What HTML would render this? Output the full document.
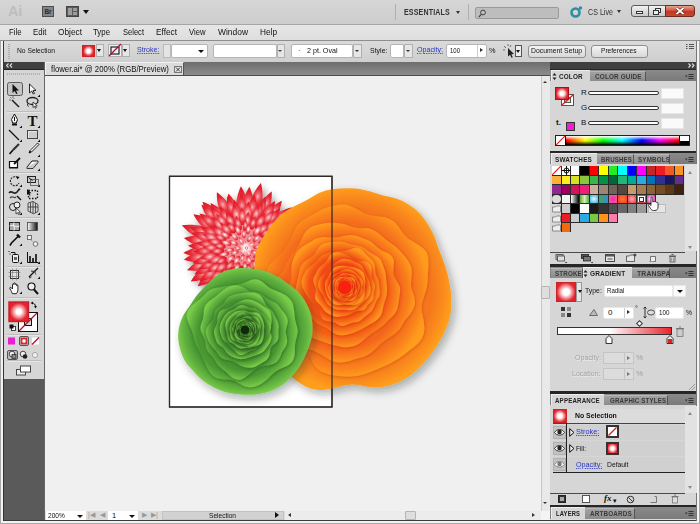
<!DOCTYPE html>
<html><head><meta charset="utf-8"><title>flower.ai</title>
<style>
*{box-sizing:border-box;margin:0;padding:0}
html,body{width:700px;height:524px;overflow:hidden}
body{position:relative;background:#d4d4d4;font-family:"Liberation Sans",sans-serif;font-size:9px;color:#111;line-height:1}
.a{position:absolute}
.t{position:absolute;white-space:nowrap}
.lnk{color:#2a35c0;text-decoration:underline dotted;}
.inp{position:absolute;background:#fff;border:1px solid #b5b5b5;border-radius:2px}
.btn{position:absolute;border:1px solid #8f8f8f;border-radius:3px;background:linear-gradient(#f4f4f4,#d8d8d8);text-align:center;font-size:8px;line-height:11px}
.tab{position:absolute;font-size:8px;font-weight:bold;letter-spacing:0.2px;color:#333;white-space:nowrap}
.dd{position:absolute;width:0;height:0;border-left:3px solid transparent;border-right:3px solid transparent;border-top:4px solid #111}
.phead{position:absolute;left:551px;width:141px;height:12px;background:linear-gradient(#5f5f5f,#7a7a7a)}
.ptab{position:absolute;top:0;height:12px;background:#d6d6d6;font-size:7.5px;font-weight:bold;color:#222;line-height:12px;padding-left:4px;white-space:nowrap}
.itab{position:absolute;top:1px;height:11px;font-size:7.5px;font-weight:bold;color:#2e2e2e;line-height:11px;white-space:nowrap;border-right:1px solid #4a4a4a;padding-left:4px;background:linear-gradient(#8e8e8e,#7c7c7c)}
.pbody{position:absolute;left:551px;width:141px;background:#d6d6d6}
.sw{position:absolute;width:8px;height:8px}
</style></head><body>
<!-- window border -->
<div class="a" style="left:0;top:0;width:700px;height:524px;background:#d9d9d9"></div>
<!-- app bar -->
<div class="a" style="left:0;top:0;width:700px;height:24px;background:linear-gradient(#d6d6d6,#cdcdcd)"></div>
<div class="t" style="left:8px;top:4px;font-size:14.500px;font-weight:bold;color:#bdbdbd;letter-spacing:-0.3px">Ai</div>
<div class="a" style="left:42px;top:6px;width:12px;height:11px;background:#858585;border:1px solid #4c4c4c;color:#2a2a2a;font-size:6.5px;font-weight:bold;line-height:9px;text-align:center">Br</div>
<div class="a" style="left:66px;top:6px;width:13px;height:11px;background:#5a5a5a;border:1px solid #444"></div>
<div class="a" style="left:68px;top:8px;width:4px;height:7px;background:#9c9c9c"></div>
<div class="a" style="left:73px;top:8px;width:4px;height:3px;background:#9c9c9c"></div>
<div class="a" style="left:73px;top:12px;width:4px;height:3px;background:#9c9c9c"></div>
<div class="dd" style="left:83px;top:10px"></div>
<div class="a" style="left:395px;top:4px;width:1px;height:16px;background:#b0b0b0"></div>
<div class="t" style="left:404px;top:8px;font-size:8.4px;font-weight:bold;color:#333;letter-spacing:0.2px;transform:scaleX(0.840);transform-origin:0 0">ESSENTIALS</div>
<div class="dd" style="left:456px;top:11px;border-left-width:2.5px;border-right-width:2.5px;border-top-width:3px;border-top-color:#333"></div>
<div class="a" style="left:468px;top:4px;width:1px;height:16px;background:#b0b0b0"></div>
<div class="a" style="left:475px;top:7px;width:84px;height:12px;background:#bdbdbd;border:1px solid #9a9a9a;border-radius:2px"></div>
<svg class="a" style="left:478px;top:9px" width="9" height="9" viewBox="0 0 9 9"><circle cx="5" cy="3.5" r="2.4" fill="none" stroke="#444" stroke-width="1"/><path d="M3.2 5.3L0.8 8" stroke="#444" stroke-width="1.2"/></svg>
<svg class="a" style="left:569px;top:5px" width="15" height="14" viewBox="0 0 15 14"><circle cx="6.5" cy="7.5" r="4" fill="none" stroke="#2a8ea6" stroke-width="2.6"/><circle cx="11.5" cy="3" r="1.7" fill="#2a8ea6"/></svg>
<div class="t" style="left:588px;top:8px;font-size:8.5px;color:#333;transform:scaleX(0.840);transform-origin:0 0">CS Live</div>
<div class="dd" style="left:617px;top:10px;border-left-width:2.5px;border-right-width:2.5px;border-top-width:3px;border-top-color:#333"></div>
<!-- window buttons -->
<div class="a" style="left:631px;top:5px;width:18px;height:12px;border:1px solid #5b5b5b;border-radius:3px 0 0 3px;background:linear-gradient(#f2f2f2,#c9c9c9)"></div>
<div class="a" style="left:636px;top:11px;width:7px;height:3px;border:1px solid #333;background:#fff"></div>
<div class="a" style="left:648px;top:5px;width:18px;height:12px;border:1px solid #5b5b5b;background:linear-gradient(#f2f2f2,#c9c9c9)"></div>
<div class="a" style="left:655px;top:8px;width:6px;height:5px;border:1px solid #333;background:#eee"></div>
<div class="a" style="left:653px;top:10px;width:6px;height:5px;border:1px solid #333;background:#eee"></div>
<div class="a" style="left:665px;top:5px;width:30px;height:12px;border:1px solid #6b2a22;border-radius:0 3px 3px 0;background:linear-gradient(#e6a594,#d05540 45%,#c23a24 55%,#c8452f)"></div>
<svg class="a" style="left:675px;top:7px" width="10" height="8"><path d="M1.500 1L8.500 7M8.500 1L1.500 7" stroke="#5a1a10" stroke-width="3"/><path d="M1.500 1L8.500 7M8.500 1L1.500 7" stroke="#fff" stroke-width="1.800"/></svg>
<!-- menu bar -->
<div class="a" style="left:0;top:24px;width:700px;height:1px;background:#a6a6a6"></div>
<div class="a" style="left:0;top:25px;width:700px;height:15px;background:linear-gradient(#e6e6e6,#dedede)"></div>
<div class="t" style="left:9px;top:28px;font-size:8.5px;transform:scaleX(0.913);transform-origin:0 0">File</div>
<div class="t" style="left:33px;top:28px;font-size:8.5px;transform:scaleX(0.922);transform-origin:0 0">Edit</div>
<div class="t" style="left:58px;top:28px;font-size:8.5px;transform:scaleX(0.977);transform-origin:0 0">Object</div>
<div class="t" style="left:93px;top:28px;font-size:8.5px;transform:scaleX(0.922);transform-origin:0 0">Type</div>
<div class="t" style="left:123px;top:28px;font-size:8.5px;transform:scaleX(0.889);transform-origin:0 0">Select</div>
<div class="t" style="left:156px;top:28px;font-size:8.5px;transform:scaleX(0.973);transform-origin:0 0">Effect</div>
<div class="t" style="left:189px;top:28px;font-size:8.5px;transform:scaleX(0.903);transform-origin:0 0">View</div>
<div class="t" style="left:218px;top:28px;font-size:8.5px;transform:scaleX(0.992);transform-origin:0 0">Window</div>
<div class="t" style="left:260px;top:28px;font-size:8.5px;transform:scaleX(0.972);transform-origin:0 0">Help</div>
<!-- control bar -->
<div class="a" style="left:0;top:40px;width:700px;height:1px;background:#8e8e8e"></div>
<div class="a" style="left:3px;top:41px;width:694px;height:21px;background:linear-gradient(#dadada,#cfcfcf)"></div>
<div class="a" style="left:8px;top:44px;width:2px;height:15px;background:repeating-linear-gradient(#aaa 0 1px,transparent 1px 2px)"></div>
<div class="t" style="left:17px;top:47px;font-size:7.5px;transform:scaleX(0.894);transform-origin:0 0">No Selection</div>
<div class="a" style="left:82px;top:45px;width:13px;height:12px;border:1px solid #c22;background:radial-gradient(circle closest-side,#fff 35%,#e0202c 105%)"></div>
<div class="a" style="left:96px;top:44px;width:8px;height:13px;border:1px solid #b0b0b0;background:#e6e6e6"></div><div class="dd" style="left:97px;top:49px;border-width:3px 2.5px 0 2.5px"></div>
<div class="a" style="left:108px;top:44px;width:14px;height:13px;border:1px solid #b0b0b0;background:#efefef"></div>
<svg class="a" style="left:107px;top:43px" width="16" height="15"><rect x="4" y="4" width="8" height="7" fill="none" stroke="#222" stroke-width="1.2"/><path d="M2 13L14 1" stroke="#a01030" stroke-width="1.3"/></svg>
<div class="a" style="left:122px;top:44px;width:8px;height:13px;border:1px solid #b0b0b0;background:#e6e6e6"></div><div class="dd" style="left:123px;top:49px;border-width:3px 2.5px 0 2.5px"></div>
<div class="t lnk" style="left:137px;top:46px;font-size:8px;transform:scaleX(0.888);transform-origin:0 0">Stroke:</div>
<div class="a" style="left:163px;top:44px;width:8px;height:14px;border:1px solid #bbb;background:#e4e4e4"></div>
<div class="inp" style="left:171px;top:44px;width:37px;height:14px"></div><div class="dd" style="left:198px;top:50px;border-width:3px 3px 0 3px"></div>
<div class="inp" style="left:213px;top:44px;width:64px;height:14px"></div>
<div class="a" style="left:277px;top:44px;width:8px;height:14px;border:1px solid #b0b0b0;background:#e6e6e6"></div><div class="dd" style="left:278px;top:50px;border-width:2px 2.5px 0 2.5px;border-top-color:#444"></div>
<div class="inp" style="left:291px;top:44px;width:62px;height:14px"></div>
<div class="t" style="left:298px;top:47px;font-size:7.5px">·</div>
<div class="t" style="left:307px;top:47px;font-size:7.5px;transform:scaleX(0.950);transform-origin:0 0">2 pt. Oval</div>
<div class="a" style="left:353px;top:44px;width:9px;height:14px;border:1px solid #b0b0b0;background:#e6e6e6"></div><div class="dd" style="left:355px;top:50px;border-width:2px 2.5px 0 2.5px;border-top-color:#333"></div>
<div class="t" style="left:370px;top:47px;font-size:7.5px;transform:scaleX(0.933);transform-origin:0 0">Style:</div>
<div class="inp" style="left:390px;top:44px;width:14px;height:14px"></div>
<div class="a" style="left:404px;top:44px;width:9px;height:14px;border:1px solid #b0b0b0;background:#e6e6e6"></div><div class="dd" style="left:406px;top:50px;border-width:2px 2.5px 0 2.5px;border-top-color:#333"></div>
<div class="t lnk" style="left:417px;top:46px;font-size:8px;transform:scaleX(0.886);transform-origin:0 0">Opacity:</div>
<div class="inp" style="left:446px;top:44px;width:41px;height:14px"></div>
<div class="t" style="left:450px;top:47px;font-size:7.5px;transform:scaleX(0.799);transform-origin:0 0">100</div>
<div class="a" style="left:477px;top:45px;width:1px;height:12px;background:#ccc"></div>
<div class="a" style="left:480px;top:48px;width:0;height:0;border-top:2.5px solid transparent;border-bottom:2.5px solid transparent;border-left:3px solid #333"></div>
<div class="t" style="left:489px;top:47px;font-size:7.5px;transform:scaleX(0.975);transform-origin:0 0">%</div>
<svg class="a" style="left:503px;top:44px" width="13" height="14" viewBox="0 0 13 14"><path d="M5 4l6 6-2.6.2 1.4 3-1.3.6-1.4-3L5 12.5z" fill="#222"/><path d="M1 2l2 2M5 0v2M8 1L7 3M0 6h2" stroke="#555" stroke-width="0.8"/></svg>
<div class="a" style="left:515px;top:45px;width:7px;height:12px;border:1px solid #555;background:#eee"></div><div class="dd" style="left:516px;top:50px;border-width:3px 2.5px 0 2.5px"></div>
<div class="btn" style="left:528px;top:45px;width:58px;height:13px"></div><div class="t" style="left:531px;top:47px;font-size:7.5px;transform:scaleX(0.913);transform-origin:0 0">Document Setup</div>
<div class="btn" style="left:591px;top:45px;width:57px;height:13px"></div><div class="t" style="left:601px;top:47px;font-size:7.5px;transform:scaleX(0.878);transform-origin:0 0">Preferences</div>
<svg class="a" style="left:686px;top:43px" width="8" height="7"><path d="M0 1.5h1.5M0 3.5h1.5M0 5.5h1.5M3 1.5h5M3 3.5h5M3 5.5h5" stroke="#555" stroke-width="1"/></svg>
<!-- tab bar -->
<div class="a" style="left:3px;top:62px;width:694px;height:13px;background:linear-gradient(#6d6d6d,#8c8c8c)"></div>
<div class="a" style="left:3px;top:75px;width:548px;height:1px;background:#4c4c4c"></div>
<!-- document tab -->
<div class="a" style="left:45px;top:62px;width:139px;height:13px;background:#dcdcdc;border-left:1px solid #f2f2f2;border-top:1px solid #f2f2f2;border-right:1px solid #555"></div>
<div class="t" style="left:51px;top:65px;font-size:8.5px;color:#111;transform:scaleX(0.917);transform-origin:0 0">flower.ai* @ 200% (RGB/Preview)</div>
<div class="a" style="left:174px;top:66px;width:8px;height:7px;border:1px solid #777;background:#e6e6e6"></div>
<svg class="a" style="left:174px;top:66px" width="8" height="7"><path d="M2 1.5L6 5.5M6 1.5L2 5.5" stroke="#333" stroke-width="1"/></svg>
<!-- canvas -->
<div class="a" style="left:45px;top:76px;width:496px;height:435px;background:#f0f0f0"></div>
<div class="a" style="left:44px;top:62px;width:1px;height:458px;background:#666"></div>
<svg class="a" style="left:45px;top:78px" width="496" height="433" viewBox="45 78 496 433"><defs><filter id="shS" x="-20%" y="-20%" width="140%" height="140%"><feDropShadow dx="0.5" dy="0.7" stdDeviation="1.6" flood-color="#a02000" flood-opacity="0.3"/></filter><filter id="shG" x="-20%" y="-20%" width="140%" height="140%"><feDropShadow dx="0.5" dy="0.7" stdDeviation="1.6" flood-color="#0a2a00" flood-opacity="0.4"/></filter><filter id="shB" x="-20%" y="-20%" width="150%" height="150%"><feDropShadow dx="3" dy="4" stdDeviation="4.500" flood-color="#101820" flood-opacity="0.33"/></filter><filter id="shR" x="-20%" y="-20%" width="150%" height="150%"><feDropShadow dx="2.5" dy="3" stdDeviation="3" flood-color="#000" flood-opacity="0.4"/></filter><radialGradient id="oc"><stop offset="0" stop-color="#ff2010"/><stop offset="0.45" stop-color="#ff2010" stop-opacity="0.9"/><stop offset="1" stop-color="#ff3010" stop-opacity="0"/></radialGradient><radialGradient id="rc"><stop offset="0" stop-color="#fff"/><stop offset="0.4" stop-color="#fff" stop-opacity="0.8"/><stop offset="1" stop-color="#fff" stop-opacity="0"/></radialGradient><radialGradient id="rp0" cx="0.5" cy="0.5" r="0.5" gradientTransform="translate(0.5 0.5) scale(1 1.6) translate(-0.5 -0.5)"><stop offset="0" stop-color="#fff"/><stop offset="0.3" stop-color="#f9b4b9"/><stop offset="0.7" stop-color="#ec4650"/><stop offset="1" stop-color="#dc1c28"/></radialGradient><radialGradient id="rp1" cx="0.5" cy="0.5" r="0.5" gradientTransform="translate(0.5 0.5) scale(1 1.6) translate(-0.5 -0.5)"><stop offset="0" stop-color="#fcd4d7"/><stop offset="0.28" stop-color="#f47f88"/><stop offset="0.62" stop-color="#e8303b"/><stop offset="1" stop-color="#d81622"/></radialGradient><radialGradient id="rp2" cx="0.5" cy="0.5" r="0.5" gradientTransform="translate(0.5 0.5) scale(1 1.6) translate(-0.5 -0.5)"><stop offset="0" stop-color="#f9b0b5"/><stop offset="0.25" stop-color="#f0606a"/><stop offset="0.55" stop-color="#e62a36"/><stop offset="1" stop-color="#d61420"/></radialGradient><radialGradient id="o0" cx="50%" cy="50%" r="52%"><stop offset="0.77" stop-color="#f5761c"/><stop offset="0.88" stop-color="#fa8a1d"/><stop offset="0.97" stop-color="#ff9e1e"/></radialGradient><radialGradient id="o1" cx="50%" cy="50%" r="52%"><stop offset="0.77" stop-color="#f46d1b"/><stop offset="0.88" stop-color="#fa841c"/><stop offset="0.97" stop-color="#ff9c1e"/></radialGradient><radialGradient id="o2" cx="50%" cy="50%" r="52%"><stop offset="0.77" stop-color="#f4651a"/><stop offset="0.88" stop-color="#fa801c"/><stop offset="0.97" stop-color="#ff9a1e"/></radialGradient><radialGradient id="o3" cx="50%" cy="50%" r="52%"><stop offset="0.77" stop-color="#f35e19"/><stop offset="0.88" stop-color="#f97b1b"/><stop offset="0.97" stop-color="#ff981d"/></radialGradient><radialGradient id="o4" cx="50%" cy="50%" r="52%"><stop offset="0.77" stop-color="#f25718"/><stop offset="0.88" stop-color="#f8771a"/><stop offset="0.97" stop-color="#ff971d"/></radialGradient><radialGradient id="o5" cx="50%" cy="50%" r="52%"><stop offset="0.77" stop-color="#f25117"/><stop offset="0.88" stop-color="#f8731a"/><stop offset="0.97" stop-color="#ff951d"/></radialGradient><radialGradient id="o6" cx="50%" cy="50%" r="52%"><stop offset="0.77" stop-color="#f14a16"/><stop offset="0.88" stop-color="#f86f1a"/><stop offset="0.97" stop-color="#ff941d"/></radialGradient><radialGradient id="o7" cx="50%" cy="50%" r="52%"><stop offset="0.77" stop-color="#f14415"/><stop offset="0.88" stop-color="#f86b19"/><stop offset="0.97" stop-color="#ff921d"/></radialGradient><radialGradient id="o8" cx="50%" cy="50%" r="52%"><stop offset="0.77" stop-color="#f03e14"/><stop offset="0.88" stop-color="#f86818"/><stop offset="0.97" stop-color="#ff911d"/></radialGradient><radialGradient id="o9" cx="50%" cy="50%" r="52%"><stop offset="0.77" stop-color="#f03913"/><stop offset="0.88" stop-color="#f86418"/><stop offset="0.97" stop-color="#ff8f1d"/></radialGradient><radialGradient id="o10" cx="50%" cy="50%" r="52%"><stop offset="0.77" stop-color="#ef3312"/><stop offset="0.88" stop-color="#f76017"/><stop offset="0.97" stop-color="#ff8e1c"/></radialGradient><radialGradient id="o11" cx="50%" cy="50%" r="52%"><stop offset="0.77" stop-color="#ef2d12"/><stop offset="0.88" stop-color="#f75d17"/><stop offset="0.97" stop-color="#ff8d1c"/></radialGradient><radialGradient id="o12" cx="50%" cy="50%" r="52%"><stop offset="0.77" stop-color="#ee2811"/><stop offset="0.88" stop-color="#f65a16"/><stop offset="0.97" stop-color="#ff8b1c"/></radialGradient><radialGradient id="o13" cx="50%" cy="50%" r="52%"><stop offset="0.77" stop-color="#ee2210"/><stop offset="0.88" stop-color="#f65616"/><stop offset="0.97" stop-color="#ff8a1c"/></radialGradient><radialGradient id="g0" cx="50%" cy="50%" r="52%"><stop offset="0.77" stop-color="#4a9a34"/><stop offset="0.88" stop-color="#62b23f"/><stop offset="0.97" stop-color="#7acb4a"/></radialGradient><radialGradient id="g1" cx="50%" cy="50%" r="52%"><stop offset="0.77" stop-color="#499833"/><stop offset="0.88" stop-color="#62b23e"/><stop offset="0.97" stop-color="#7acb4a"/></radialGradient><radialGradient id="g2" cx="50%" cy="50%" r="52%"><stop offset="0.77" stop-color="#479432"/><stop offset="0.88" stop-color="#60b03e"/><stop offset="0.97" stop-color="#7acb4a"/></radialGradient><radialGradient id="g3" cx="50%" cy="50%" r="52%"><stop offset="0.77" stop-color="#448f30"/><stop offset="0.88" stop-color="#5eac3d"/><stop offset="0.97" stop-color="#79ca4a"/></radialGradient><radialGradient id="g4" cx="50%" cy="50%" r="52%"><stop offset="0.77" stop-color="#41892e"/><stop offset="0.88" stop-color="#5daa3c"/><stop offset="0.97" stop-color="#79ca4a"/></radialGradient><radialGradient id="g5" cx="50%" cy="50%" r="52%"><stop offset="0.77" stop-color="#3d822b"/><stop offset="0.88" stop-color="#5ba63a"/><stop offset="0.97" stop-color="#79ca4a"/></radialGradient><radialGradient id="g6" cx="50%" cy="50%" r="52%"><stop offset="0.77" stop-color="#387928"/><stop offset="0.88" stop-color="#58a138"/><stop offset="0.97" stop-color="#78c949"/></radialGradient><radialGradient id="g7" cx="50%" cy="50%" r="52%"><stop offset="0.77" stop-color="#337024"/><stop offset="0.88" stop-color="#569c36"/><stop offset="0.97" stop-color="#78c949"/></radialGradient><radialGradient id="g8" cx="50%" cy="50%" r="52%"><stop offset="0.77" stop-color="#2d6621"/><stop offset="0.88" stop-color="#529735"/><stop offset="0.97" stop-color="#77c849"/></radialGradient><radialGradient id="g9" cx="50%" cy="50%" r="52%"><stop offset="0.77" stop-color="#285c1d"/><stop offset="0.88" stop-color="#509233"/><stop offset="0.97" stop-color="#77c849"/></radialGradient><radialGradient id="g10" cx="50%" cy="50%" r="52%"><stop offset="0.77" stop-color="#215018"/><stop offset="0.88" stop-color="#4c8c30"/><stop offset="0.97" stop-color="#76c749"/></radialGradient><radialGradient id="g11" cx="50%" cy="50%" r="52%"><stop offset="0.77" stop-color="#1b4414"/><stop offset="0.88" stop-color="#48852e"/><stop offset="0.97" stop-color="#75c648"/></radialGradient><radialGradient id="g12" cx="50%" cy="50%" r="52%"><stop offset="0.77" stop-color="#13370f"/><stop offset="0.88" stop-color="#447e2c"/><stop offset="0.97" stop-color="#75c648"/></radialGradient><radialGradient id="g13" cx="50%" cy="50%" r="52%"><stop offset="0.77" stop-color="#0c2a0a"/><stop offset="0.88" stop-color="#407829"/><stop offset="0.97" stop-color="#74c548"/></radialGradient></defs><rect x="169.500" y="176.300" width="162.500" height="230.700" fill="#fff" stroke="#333" stroke-width="1.200"/><g filter="url(#shR)"><g transform="translate(245 249)"><circle r="36" fill="#f28890"/><path d="M35.6 0C35.6 -9.2 53.1 -7.7 67.5 0C53.1 7.7 35.6 9.2 35.6 0Z" transform="rotate(200.5)" fill="url(#rp2)"/><path d="M34.1 0C34.1 -9.7 52.7 -8.2 67.9 0C52.7 8.2 34.1 9.7 34.1 0Z" transform="rotate(63.0)" fill="url(#rp2)"/><path d="M40.2 0C40.2 -7.9 55.4 -6.7 67.8 0C55.4 6.7 40.2 7.9 40.2 0Z" transform="rotate(283.6)" fill="url(#rp2)"/><path d="M31.7 0C31.7 -9.1 49.1 -7.6 63.3 0C49.1 7.6 31.7 9.1 31.7 0Z" transform="rotate(149.1)" fill="url(#rp2)"/><path d="M35.1 0C35.1 -8.7 51.7 -7.3 65.3 0C51.7 7.3 35.1 8.7 35.1 0Z" transform="rotate(7.1)" fill="url(#rp2)"/><path d="M32.6 0C32.6 -8.9 49.6 -7.5 63.5 0C49.6 7.5 32.6 8.9 32.6 0Z" transform="rotate(228.0)" fill="url(#rp2)"/><path d="M37.3 0C37.3 -8.3 53.1 -7.0 66.1 0C53.1 7.0 37.3 8.3 37.3 0Z" transform="rotate(96.7)" fill="url(#rp2)"/><path d="M34.8 0C34.8 -8.0 50.1 -6.7 62.7 0C50.1 6.7 34.8 8.0 34.8 0Z" transform="rotate(318.3)" fill="url(#rp2)"/><path d="M31.0 0C31.0 -8.8 47.9 -7.4 61.8 0C47.9 7.4 31.0 8.8 31.0 0Z" transform="rotate(176.2)" fill="url(#rp2)"/><path d="M30.4 0C30.4 -9.3 48.1 -7.8 62.7 0C48.1 7.8 30.4 9.3 30.4 0Z" transform="rotate(39.3)" fill="url(#rp2)"/><path d="M30.0 0C30.0 -9.4 48.1 -7.9 62.9 0C48.1 7.9 30.0 9.4 30.0 0Z" transform="rotate(266.3)" fill="url(#rp2)"/><path d="M32.1 0C32.1 -9.4 50.0 -7.9 64.6 0C50.0 7.9 32.1 9.4 32.1 0Z" transform="rotate(126.5)" fill="url(#rp2)"/><path d="M36.9 0C36.9 -7.9 52.1 -6.7 64.5 0C52.1 6.7 36.9 7.9 36.9 0Z" transform="rotate(351.8)" fill="url(#rp2)"/><path d="M30.0 0C30.0 -9.3 47.8 -7.8 62.3 0C47.8 7.8 30.0 9.3 30.0 0Z" transform="rotate(214.0)" fill="url(#rp2)"/><path d="M33.0 0C33.0 -8.1 48.6 -6.8 61.3 0C48.6 6.8 33.0 8.1 33.0 0Z" transform="rotate(71.4)" fill="url(#rp2)"/><path d="M37.1 0C37.1 -7.6 51.6 -6.4 63.4 0C51.6 6.4 37.1 7.6 37.1 0Z" transform="rotate(294.9)" fill="url(#rp2)"/><path d="M36.1 0C36.1 -7.4 50.3 -6.2 61.9 0C50.3 6.2 36.1 7.4 36.1 0Z" transform="rotate(159.9)" fill="url(#rp2)"/><path d="M34.8 0C34.8 -7.9 50.0 -6.7 62.4 0C50.0 6.7 34.8 7.9 34.8 0Z" transform="rotate(23.4)" fill="url(#rp2)"/><path d="M35.8 0C35.8 -7.9 50.9 -6.7 63.3 0C50.9 6.7 35.8 7.9 35.8 0Z" transform="rotate(243.6)" fill="url(#rp2)"/><path d="M33.9 0C33.9 -7.4 48.1 -6.2 59.7 0C48.1 6.2 33.9 7.4 33.9 0Z" transform="rotate(109.5)" fill="url(#rp2)"/><path d="M29.5 0C29.5 -8.6 46.0 -7.2 59.5 0C46.0 7.2 29.5 8.6 29.5 0Z" transform="rotate(331.1)" fill="url(#rp2)"/><path d="M32.0 0C32.0 -8.7 48.5 -7.3 62.1 0C48.5 7.3 32.0 8.7 32.0 0Z" transform="rotate(190.3)" fill="url(#rp2)"/><path d="M34.7 0C34.7 -7.2 48.6 -6.1 59.9 0C48.6 6.1 34.7 7.2 34.7 0Z" transform="rotate(50.6)" fill="url(#rp2)"/><path d="M31.7 0C31.7 -8.9 48.6 -7.4 62.5 0C48.6 7.4 31.7 8.9 31.7 0Z" transform="rotate(274.1)" fill="url(#rp2)"/><path d="M29.8 0C29.8 -8.8 46.6 -7.4 60.3 0C46.6 7.4 29.8 8.8 29.8 0Z" transform="rotate(141.7)" fill="url(#rp2)"/><path d="M35.3 0C35.3 -7.7 50.1 -6.5 62.2 0C50.1 6.5 35.3 7.7 35.3 0Z" transform="rotate(1.3)" fill="url(#rp2)"/><path d="M36.8 0C36.8 -7.3 50.7 -6.1 62.1 0C50.7 6.1 36.8 7.3 36.8 0Z" transform="rotate(225.4)" fill="url(#rp2)"/><path d="M32.9 0C32.9 -8.5 49.2 -7.2 62.6 0C49.2 7.2 32.9 8.5 32.9 0Z" transform="rotate(83.0)" fill="url(#rp2)"/><path d="M35.8 0C35.8 -7.2 49.5 -6.0 60.7 0C49.5 6.0 35.8 7.2 35.8 0Z" transform="rotate(307.5)" fill="url(#rp2)"/><path d="M32.3 0C32.3 -8.6 48.6 -7.2 62.0 0C48.6 7.2 32.3 8.6 32.3 0Z" transform="rotate(170.0)" fill="url(#rp2)"/><path d="M31.5 0C31.5 -7.9 46.6 -6.6 58.9 0C46.6 6.6 31.5 7.9 31.5 0Z" transform="rotate(32.3)" fill="url(#rp2)"/><path d="M32.8 0C32.8 -7.2 46.6 -6.1 57.9 0C46.6 6.1 32.8 7.2 32.8 0Z" transform="rotate(253.2)" fill="url(#rp2)"/><path d="M29.7 0C29.7 -8.1 45.1 -6.8 57.7 0C45.1 6.8 29.7 8.1 29.7 0Z" transform="rotate(122.0)" fill="url(#rp2)"/><path d="M35.2 0C35.2 -6.9 48.4 -5.8 59.3 0C48.4 5.8 35.2 6.9 35.2 0Z" transform="rotate(344.4)" fill="url(#rp2)"/><path d="M33.3 0C33.3 -7.5 47.6 -6.3 59.4 0C47.6 6.3 33.3 7.5 33.3 0Z" transform="rotate(201.8)" fill="url(#rp2)"/><path d="M29.9 0C29.9 -8.2 45.6 -6.9 58.3 0C45.6 6.9 29.9 8.2 29.9 0Z" transform="rotate(65.8)" fill="url(#rp2)"/><path d="M32.5 0C32.5 -6.8 45.6 -5.8 56.3 0C45.6 5.8 32.5 6.8 32.5 0Z" transform="rotate(291.4)" fill="url(#rp2)"/><path d="M30.3 0C30.3 -7.5 44.8 -6.3 56.5 0C44.8 6.3 30.3 7.5 30.3 0Z" transform="rotate(153.4)" fill="url(#rp2)"/><path d="M31.2 0C31.2 -7.9 46.3 -6.6 58.7 0C46.3 6.6 31.2 7.9 31.2 0Z" transform="rotate(16.6)" fill="url(#rp2)"/><path d="M29.9 0C29.9 -7.9 45.1 -6.7 57.5 0C45.1 6.7 29.9 7.9 29.9 0Z" transform="rotate(233.3)" fill="url(#rp2)"/><path d="M32.8 0C32.8 -6.9 45.9 -5.8 56.7 0C45.9 5.8 32.8 6.9 32.8 0Z" transform="rotate(100.9)" fill="url(#rp2)"/><path d="M33.5 0C33.5 -7.3 47.5 -6.1 59.0 0C47.5 6.1 33.5 7.3 33.5 0Z" transform="rotate(324.5)" fill="url(#rp2)"/><path d="M28.9 0C28.9 -8.1 44.4 -6.8 57.1 0C44.4 6.8 28.9 8.1 28.9 0Z" transform="rotate(183.2)" fill="url(#rp2)"/><path d="M29.2 0C29.2 -7.7 44.0 -6.5 56.0 0C44.0 6.5 29.2 7.7 29.2 0Z" transform="rotate(45.9)" fill="url(#rp2)"/><path d="M31.3 0C31.3 -7.1 45.0 -6.0 56.1 0C45.0 6.0 31.3 7.1 31.3 0Z" transform="rotate(266.1)" fill="url(#rp2)"/><path d="M29.2 0C29.2 -8.0 44.5 -6.7 57.1 0C44.5 6.7 29.2 8.0 29.2 0Z" transform="rotate(134.2)" fill="url(#rp2)"/><path d="M29.3 0C29.3 -7.2 43.1 -6.1 54.4 0C43.1 6.1 29.3 7.2 29.3 0Z" transform="rotate(352.4)" fill="url(#rp2)"/><path d="M34.0 0C34.0 -6.8 47.0 -5.7 57.7 0C47.0 5.7 34.0 6.8 34.0 0Z" transform="rotate(217.9)" fill="url(#rp2)"/><path d="M33.0 0C33.0 -6.9 46.2 -5.8 57.0 0C46.2 5.8 33.0 6.9 33.0 0Z" transform="rotate(80.4)" fill="url(#rp2)"/><path d="M31.0 0C31.0 -7.4 45.1 -6.2 56.7 0C45.1 6.2 31.0 7.4 31.0 0Z" transform="rotate(302.1)" fill="url(#rp2)"/><path d="M30.6 0C30.6 -6.8 43.6 -5.8 54.4 0C43.6 5.8 30.6 6.8 30.6 0Z" transform="rotate(164.9)" fill="url(#rp2)"/><path d="M31.6 0C31.6 -7.0 45.0 -5.9 55.9 0C45.0 5.9 31.6 7.0 31.6 0Z" transform="rotate(27.8)" fill="url(#rp2)"/><path d="M32.3 0C32.3 -6.7 45.1 -5.6 55.5 0C45.1 5.6 32.3 6.7 32.3 0Z" transform="rotate(251.5)" fill="url(#rp2)"/><path d="M30.3 0C30.3 -7.1 43.8 -5.9 54.8 0C43.8 5.9 30.3 7.1 30.3 0Z" transform="rotate(107.6)" fill="url(#rp2)"/><path d="M31.5 0C31.5 -6.5 44.0 -5.5 54.2 0C44.0 5.5 31.5 6.5 31.5 0Z" transform="rotate(334.6)" fill="url(#rp2)"/><path d="M29.9 0C29.9 -7.3 44.0 -6.2 55.5 0C44.0 6.2 29.9 7.3 29.9 0Z" transform="rotate(196.9)" fill="url(#rp2)"/><path d="M32.0 0C32.0 -6.6 44.6 -5.5 55.0 0C44.6 5.5 32.0 6.6 32.0 0Z" transform="rotate(59.4)" fill="url(#rp2)"/><path d="M29.9 0C29.9 -7.3 43.8 -6.1 55.2 0C43.8 6.1 29.9 7.3 29.9 0Z" transform="rotate(279.9)" fill="url(#rp2)"/><path d="M30.1 0C30.1 -7.3 44.1 -6.1 55.5 0C44.1 6.1 30.1 7.3 30.1 0Z" transform="rotate(144.7)" fill="url(#rp2)"/><path d="M27.7 0C27.7 -7.4 41.8 -6.2 53.3 0C41.8 6.2 27.7 7.4 27.7 0Z" transform="rotate(6.0)" fill="url(#rp2)"/><path d="M33.3 0C33.3 -6.2 45.1 -5.2 54.8 0C45.1 5.2 33.3 6.2 33.3 0Z" transform="rotate(230.7)" fill="url(#rp2)"/><path d="M30.7 0C30.7 -6.6 43.3 -5.5 53.7 0C43.3 5.5 30.7 6.6 30.7 0Z" transform="rotate(92.2)" fill="url(#rp2)"/><path d="M29.6 0C29.6 -6.9 42.8 -5.8 53.7 0C42.8 5.8 29.6 6.9 29.6 0Z" transform="rotate(311.1)" fill="url(#rp2)"/><path d="M28.7 0C28.7 -6.7 41.5 -5.6 51.9 0C41.5 5.6 28.7 6.7 28.7 0Z" transform="rotate(177.0)" fill="url(#rp2)"/><path d="M29.3 0C29.3 -6.7 42.1 -5.6 52.6 0C42.1 5.6 29.3 6.7 29.3 0Z" transform="rotate(40.2)" fill="url(#rp2)"/><path d="M26.7 0C26.7 -6.8 39.7 -5.7 50.3 0C39.7 5.7 26.7 6.8 26.7 0Z" transform="rotate(257.6)" fill="url(#rp2)"/><path d="M28.2 0C28.2 -6.4 40.4 -5.3 50.3 0C40.4 5.3 28.2 6.4 28.2 0Z" transform="rotate(124.4)" fill="url(#rp2)"/><path d="M26.2 0C26.2 -6.7 38.9 -5.6 49.4 0C38.9 5.6 26.2 6.7 26.2 0Z" transform="rotate(346.7)" fill="url(#rp2)"/><path d="M27.2 0C27.2 -6.3 39.3 -5.3 49.2 0C39.3 5.3 27.2 6.3 27.2 0Z" transform="rotate(206.4)" fill="url(#rp2)"/><path d="M29.2 0C29.2 -5.8 40.3 -4.9 49.5 0C40.3 4.9 29.2 5.8 29.2 0Z" transform="rotate(69.5)" fill="url(#rp2)"/><path d="M29.9 0C29.9 -5.9 41.2 -4.9 50.4 0C41.2 4.9 29.9 5.9 29.9 0Z" transform="rotate(290.1)" fill="url(#rp2)"/><path d="M29.4 0C29.4 -6.1 41.1 -5.1 50.6 0C41.1 5.1 29.4 6.1 29.4 0Z" transform="rotate(156.6)" fill="url(#rp2)"/><path d="M27.6 0C27.6 -5.9 38.8 -4.9 48.0 0C38.8 4.9 27.6 5.9 27.6 0Z" transform="rotate(21.0)" fill="url(#rp2)"/><path d="M28.3 0C28.3 -6.0 39.9 -5.1 49.4 0C39.9 5.1 28.3 6.0 28.3 0Z" transform="rotate(239.2)" fill="url(#rp2)"/><path d="M29.4 0C29.4 -5.6 40.2 -4.7 49.0 0C40.2 4.7 29.4 5.6 29.4 0Z" transform="rotate(105.5)" fill="url(#rp2)"/><path d="M28.5 0C28.5 -5.5 39.0 -4.6 47.6 0C39.0 4.6 28.5 5.5 28.5 0Z" transform="rotate(326.5)" fill="url(#rp2)"/><path d="M28.0 0C28.0 -6.1 39.7 -5.1 49.3 0C39.7 5.1 28.0 6.1 28.0 0Z" transform="rotate(187.1)" fill="url(#rp2)"/><path d="M25.3 0C25.3 -6.6 38.0 -5.6 48.4 0C38.0 5.6 25.3 6.6 25.3 0Z" transform="rotate(52.9)" fill="url(#rp1)"/><path d="M25.7 0C25.7 -6.4 37.9 -5.4 47.9 0C37.9 5.4 25.7 6.4 25.7 0Z" transform="rotate(274.2)" fill="url(#rp1)"/><path d="M29.3 0C29.3 -5.5 39.8 -4.6 48.4 0C39.8 4.6 29.3 5.5 29.3 0Z" transform="rotate(136.4)" fill="url(#rp1)"/><path d="M25.7 0C25.7 -6.5 38.1 -5.5 48.3 0C38.1 5.5 25.7 6.5 25.7 0Z" transform="rotate(1.4)" fill="url(#rp1)"/><path d="M26.0 0C26.0 -5.7 36.8 -4.8 45.7 0C36.8 4.8 26.0 5.7 26.0 0Z" transform="rotate(223.4)" fill="url(#rp1)"/><path d="M29.2 0C29.2 -5.3 39.4 -4.5 47.8 0C39.4 4.5 29.2 5.3 29.2 0Z" transform="rotate(83.6)" fill="url(#rp1)"/><path d="M30.0 0C30.0 -5.3 40.2 -4.5 48.6 0C40.2 4.5 30.0 5.3 30.0 0Z" transform="rotate(306.6)" fill="url(#rp1)"/><path d="M26.3 0C26.3 -5.6 37.0 -4.7 45.8 0C37.0 4.7 26.3 5.6 26.3 0Z" transform="rotate(167.7)" fill="url(#rp1)"/><path d="M27.1 0C27.1 -5.5 37.6 -4.6 46.1 0C37.6 4.6 27.1 5.5 27.1 0Z" transform="rotate(33.9)" fill="url(#rp1)"/><path d="M24.9 0C24.9 -6.2 36.8 -5.2 46.6 0C36.8 5.2 24.9 6.2 24.9 0Z" transform="rotate(256.0)" fill="url(#rp1)"/><path d="M27.4 0C27.4 -5.3 37.6 -4.5 46.0 0C37.6 4.5 27.4 5.3 27.4 0Z" transform="rotate(119.0)" fill="url(#rp1)"/><path d="M28.4 0C28.4 -5.5 38.9 -4.6 47.5 0C38.9 4.6 28.4 5.5 28.4 0Z" transform="rotate(336.9)" fill="url(#rp1)"/><path d="M26.1 0C26.1 -5.5 36.7 -4.7 45.3 0C36.7 4.7 26.1 5.5 26.1 0Z" transform="rotate(199.2)" fill="url(#rp1)"/><path d="M27.3 0C27.3 -5.1 37.0 -4.3 44.9 0C37.0 4.3 27.3 5.1 27.3 0Z" transform="rotate(64.0)" fill="url(#rp1)"/><path d="M27.8 0C27.8 -5.2 37.8 -4.4 46.0 0C37.8 4.4 27.8 5.2 27.8 0Z" transform="rotate(287.6)" fill="url(#rp1)"/><path d="M26.9 0C26.9 -4.9 36.2 -4.1 43.8 0C36.2 4.1 26.9 4.9 26.9 0Z" transform="rotate(148.3)" fill="url(#rp1)"/><path d="M22.8 0C22.8 -5.9 34.1 -5.0 43.4 0C34.1 5.0 22.8 5.9 22.8 0Z" transform="rotate(12.5)" fill="url(#rp1)"/><path d="M28.0 0C28.0 -5.1 37.7 -4.3 45.7 0C37.7 4.3 28.0 5.1 28.0 0Z" transform="rotate(230.7)" fill="url(#rp1)"/><path d="M25.9 0C25.9 -5.1 35.7 -4.3 43.6 0C35.7 4.3 25.9 5.1 25.9 0Z" transform="rotate(96.3)" fill="url(#rp1)"/><path d="M25.3 0C25.3 -5.4 35.7 -4.6 44.2 0C35.7 4.6 25.3 5.4 25.3 0Z" transform="rotate(318.8)" fill="url(#rp1)"/><path d="M25.7 0C25.7 -4.8 34.9 -4.0 42.4 0C34.9 4.0 25.7 4.8 25.7 0Z" transform="rotate(182.4)" fill="url(#rp1)"/><path d="M23.9 0C23.9 -5.2 33.9 -4.4 42.1 0C33.9 4.4 23.9 5.2 23.9 0Z" transform="rotate(41.9)" fill="url(#rp1)"/><path d="M24.0 0C24.0 -5.2 33.9 -4.4 42.0 0C33.9 4.4 24.0 5.2 24.0 0Z" transform="rotate(265.3)" fill="url(#rp1)"/><path d="M21.9 0C21.9 -5.4 32.2 -4.5 40.6 0C32.2 4.5 21.9 5.4 21.9 0Z" transform="rotate(128.7)" fill="url(#rp1)"/><path d="M26.6 0C26.6 -4.8 35.8 -4.0 43.3 0C35.8 4.0 26.6 4.8 26.6 0Z" transform="rotate(350.2)" fill="url(#rp1)"/><path d="M21.0 0C21.0 -5.5 31.4 -4.6 40.0 0C31.4 4.6 21.0 5.5 21.0 0Z" transform="rotate(213.3)" fill="url(#rp1)"/><path d="M23.1 0C23.1 -5.3 33.2 -4.5 41.5 0C33.2 4.5 23.1 5.3 23.1 0Z" transform="rotate(75.0)" fill="url(#rp1)"/><path d="M22.9 0C22.9 -5.2 32.8 -4.4 40.9 0C32.8 4.4 22.9 5.2 22.9 0Z" transform="rotate(298.9)" fill="url(#rp1)"/><path d="M21.7 0C21.7 -5.4 31.9 -4.5 40.3 0C31.9 4.5 21.7 5.4 21.7 0Z" transform="rotate(159.7)" fill="url(#rp1)"/><path d="M21.4 0C21.4 -5.3 31.5 -4.4 39.7 0C31.5 4.4 21.4 5.3 21.4 0Z" transform="rotate(20.9)" fill="url(#rp1)"/><path d="M23.1 0C23.1 -5.2 33.0 -4.4 41.1 0C33.0 4.4 23.1 5.2 23.1 0Z" transform="rotate(242.5)" fill="url(#rp1)"/><path d="M21.6 0C21.6 -5.0 31.2 -4.2 39.0 0C31.2 4.2 21.6 5.0 21.6 0Z" transform="rotate(107.5)" fill="url(#rp1)"/><path d="M20.7 0C20.7 -5.0 30.3 -4.2 38.2 0C30.3 4.2 20.7 5.0 20.7 0Z" transform="rotate(333.3)" fill="url(#rp1)"/><path d="M22.7 0C22.7 -4.7 31.7 -3.9 39.0 0C31.7 3.9 22.7 4.7 22.7 0Z" transform="rotate(193.3)" fill="url(#rp1)"/><path d="M23.3 0C23.3 -4.5 31.9 -3.8 39.0 0C31.9 3.8 23.3 4.5 23.3 0Z" transform="rotate(53.1)" fill="url(#rp1)"/><path d="M20.3 0C20.3 -4.9 29.8 -4.2 37.6 0C29.8 4.2 20.3 4.9 20.3 0Z" transform="rotate(275.0)" fill="url(#rp1)"/><path d="M21.5 0C21.5 -4.9 30.9 -4.1 38.5 0C30.9 4.1 21.5 4.9 21.5 0Z" transform="rotate(142.5)" fill="url(#rp1)"/><path d="M25.0 0C25.0 -4.1 32.8 -3.4 39.2 0C32.8 3.4 25.0 4.1 25.0 0Z" transform="rotate(4.5)" fill="url(#rp1)"/><path d="M18.6 0C18.6 -5.0 28.2 -4.2 36.0 0C28.2 4.2 18.6 5.0 18.6 0Z" transform="rotate(226.8)" fill="url(#rp1)"/><path d="M20.8 0C20.8 -4.8 29.9 -4.0 37.5 0C29.9 4.0 20.8 4.8 20.8 0Z" transform="rotate(86.0)" fill="url(#rp1)"/><path d="M18.7 0C18.7 -4.9 28.0 -4.1 35.6 0C28.0 4.1 18.7 4.9 18.7 0Z" transform="rotate(311.9)" fill="url(#rp1)"/><path d="M20.7 0C20.7 -4.2 28.8 -3.5 35.3 0C28.8 3.5 20.7 4.2 20.7 0Z" transform="rotate(175.8)" fill="url(#rp1)"/><path d="M19.5 0C19.5 -4.5 28.0 -3.7 35.0 0C28.0 3.7 19.5 4.5 19.5 0Z" transform="rotate(34.8)" fill="url(#rp1)"/><path d="M19.1 0C19.1 -4.4 27.6 -3.7 34.5 0C27.6 3.7 19.1 4.4 19.1 0Z" transform="rotate(254.8)" fill="url(#rp1)"/><path d="M19.6 0C19.6 -4.2 27.5 -3.5 34.0 0C27.5 3.5 19.6 4.2 19.6 0Z" transform="rotate(117.4)" fill="url(#rp1)"/><path d="M21.0 0C21.0 -4.3 29.2 -3.6 35.9 0C29.2 3.6 21.0 4.3 21.0 0Z" transform="rotate(344.5)" fill="url(#rp1)"/><path d="M20.6 0C20.6 -3.8 28.0 -3.2 34.0 0C28.0 3.2 20.6 3.8 20.6 0Z" transform="rotate(204.9)" fill="url(#rp1)"/><path d="M20.6 0C20.6 -4.2 28.7 -3.6 35.3 0C28.7 3.6 20.6 4.2 20.6 0Z" transform="rotate(67.8)" fill="url(#rp1)"/><path d="M20.4 0C20.4 -4.0 28.1 -3.3 34.3 0C28.1 3.3 20.4 4.0 20.4 0Z" transform="rotate(287.3)" fill="url(#rp1)"/><path d="M20.4 0C20.4 -3.7 27.5 -3.1 33.4 0C27.5 3.1 20.4 3.7 20.4 0Z" transform="rotate(153.7)" fill="url(#rp1)"/><path d="M18.1 0C18.1 -4.4 26.5 -3.7 33.3 0C26.5 3.7 18.1 4.4 18.1 0Z" transform="rotate(15.7)" fill="url(#rp1)"/><path d="M18.9 0C18.9 -3.8 26.1 -3.2 32.0 0C26.1 3.2 18.9 3.8 18.9 0Z" transform="rotate(238.2)" fill="url(#rp1)"/><path d="M16.9 0C16.9 -4.1 24.8 -3.5 31.3 0C24.8 3.5 16.9 4.1 16.9 0Z" transform="rotate(100.4)" fill="url(#rp1)"/><path d="M19.7 0C19.7 -3.7 26.7 -3.1 32.4 0C26.7 3.1 19.7 3.7 19.7 0Z" transform="rotate(321.9)" fill="url(#rp1)"/><path d="M19.4 0C19.4 -3.6 26.2 -3.0 31.8 0C26.2 3.0 19.4 3.6 19.4 0Z" transform="rotate(186.8)" fill="url(#rp1)"/><path d="M18.0 0C18.0 -3.5 24.6 -2.9 30.0 0C24.6 2.9 18.0 3.5 18.0 0Z" transform="rotate(49.0)" fill="url(#rp1)"/><path d="M17.9 0C17.9 -3.5 24.5 -2.9 29.9 0C24.5 2.9 17.9 3.5 17.9 0Z" transform="rotate(270.9)" fill="url(#rp1)"/><path d="M15.7 0C15.7 -4.0 23.4 -3.4 29.7 0C23.4 3.4 15.7 4.0 15.7 0Z" transform="rotate(132.6)" fill="url(#rp1)"/><path d="M16.7 0C16.7 -3.9 24.1 -3.3 30.3 0C24.1 3.3 16.7 3.9 16.7 0Z" transform="rotate(352.0)" fill="url(#rp1)"/><path d="M19.0 0C19.0 -3.3 25.2 -2.8 30.4 0C25.2 2.8 19.0 3.3 19.0 0Z" transform="rotate(215.4)" fill="url(#rp0)"/><path d="M15.0 0C15.0 -3.7 22.1 -3.1 28.0 0C22.1 3.1 15.0 3.7 15.0 0Z" transform="rotate(78.4)" fill="url(#rp0)"/><path d="M15.5 0C15.5 -3.9 23.0 -3.3 29.1 0C23.0 3.3 15.5 3.9 15.5 0Z" transform="rotate(303.9)" fill="url(#rp0)"/><path d="M16.4 0C16.4 -3.2 22.6 -2.7 27.6 0C22.6 2.7 16.4 3.2 16.4 0Z" transform="rotate(166.1)" fill="url(#rp0)"/><path d="M16.4 0C16.4 -3.3 22.6 -2.7 27.7 0C22.6 2.7 16.4 3.3 16.4 0Z" transform="rotate(26.6)" fill="url(#rp0)"/><path d="M14.7 0C14.7 -3.3 21.1 -2.8 26.2 0C21.1 2.8 14.7 3.3 14.7 0Z" transform="rotate(249.4)" fill="url(#rp0)"/><path d="M14.6 0C14.6 -3.6 21.5 -3.0 27.2 0C21.5 3.0 14.6 3.6 14.6 0Z" transform="rotate(113.7)" fill="url(#rp0)"/><path d="M14.7 0C14.7 -3.3 21.0 -2.8 26.1 0C21.0 2.8 14.7 3.3 14.7 0Z" transform="rotate(337.6)" fill="url(#rp0)"/><path d="M14.4 0C14.4 -3.3 20.8 -2.8 26.1 0C20.8 2.8 14.4 3.3 14.4 0Z" transform="rotate(198.2)" fill="url(#rp0)"/><path d="M13.1 0C13.1 -3.2 19.2 -2.7 24.1 0C19.2 2.7 13.1 3.2 13.1 0Z" transform="rotate(57.4)" fill="url(#rp0)"/><path d="M14.9 0C14.9 -3.0 20.6 -2.5 25.3 0C20.6 2.5 14.9 3.0 14.9 0Z" transform="rotate(279.5)" fill="url(#rp0)"/><path d="M12.1 0C12.1 -3.1 18.1 -2.6 23.1 0C18.1 2.6 12.1 3.1 12.1 0Z" transform="rotate(147.0)" fill="url(#rp0)"/><path d="M13.0 0C13.0 -3.1 18.9 -2.6 23.7 0C18.9 2.6 13.0 3.1 13.0 0Z" transform="rotate(10.3)" fill="url(#rp0)"/><path d="M11.7 0C11.7 -3.0 17.5 -2.5 22.2 0C17.5 2.5 11.7 3.0 11.7 0Z" transform="rotate(229.9)" fill="url(#rp0)"/><path d="M12.4 0C12.4 -2.8 17.8 -2.3 22.1 0C17.8 2.3 12.4 2.8 12.4 0Z" transform="rotate(90.3)" fill="url(#rp0)"/><path d="M11.1 0C11.1 -2.9 16.6 -2.4 21.2 0C16.6 2.4 11.1 2.9 11.1 0Z" transform="rotate(317.8)" fill="url(#rp0)"/><path d="M11.0 0C11.0 -2.8 16.3 -2.3 20.6 0C16.3 2.3 11.0 2.8 11.0 0Z" transform="rotate(176.1)" fill="url(#rp0)"/><path d="M11.0 0C11.0 -2.7 16.2 -2.3 20.5 0C16.2 2.3 11.0 2.7 11.0 0Z" transform="rotate(38.3)" fill="url(#rp0)"/><path d="M10.9 0C10.9 -2.5 15.7 -2.1 19.7 0C15.7 2.1 10.9 2.5 10.9 0Z" transform="rotate(265.5)" fill="url(#rp0)"/><path d="M8.9 0C8.9 -3.1 14.8 -2.6 19.5 0C14.8 2.6 8.9 3.1 8.9 0Z" transform="rotate(126.4)" fill="url(#rp0)"/><path d="M8.6 0C8.6 -2.7 13.8 -2.3 18.0 0C13.8 2.3 8.6 2.7 8.6 0Z" transform="rotate(350.7)" fill="url(#rp0)"/><path d="M8.4 0C8.4 -2.8 13.8 -2.3 18.1 0C13.8 2.3 8.4 2.8 8.4 0Z" transform="rotate(208.7)" fill="url(#rp0)"/><path d="M7.1 0C7.1 -2.8 12.4 -2.3 16.8 0C12.4 2.3 7.1 2.8 7.1 0Z" transform="rotate(70.3)" fill="url(#rp0)"/><path d="M7.8 0C7.8 -2.3 12.2 -2.0 15.8 0C12.2 2.0 7.8 2.3 7.8 0Z" transform="rotate(293.2)" fill="url(#rp0)"/><path d="M6.8 0C6.8 -2.5 11.5 -2.1 15.4 0C11.5 2.1 6.8 2.5 6.8 0Z" transform="rotate(160.8)" fill="url(#rp0)"/><path d="M6.2 0C6.2 -2.4 10.8 -2.0 14.5 0C10.8 2.0 6.2 2.4 6.2 0Z" transform="rotate(19.8)" fill="url(#rp0)"/><path d="M4.5 0C4.5 -2.6 9.5 -2.2 13.5 0C9.5 2.2 4.5 2.6 4.5 0Z" transform="rotate(244.1)" fill="url(#rp0)"/><path d="M5.5 0C5.5 -2.3 9.8 -1.9 13.4 0C9.8 1.9 5.5 2.3 5.5 0Z" transform="rotate(106.2)" fill="url(#rp0)"/><path d="M3.9 0C3.9 -2.4 8.5 -2.0 12.3 0C8.5 2.0 3.9 2.4 3.9 0Z" transform="rotate(327.1)" fill="url(#rp0)"/><path d="M3.9 0C3.9 -2.0 7.8 -1.7 11.0 0C7.8 1.7 3.9 2.0 3.9 0Z" transform="rotate(187.0)" fill="url(#rp0)"/><path d="M1.9 0C1.9 -2.2 6.1 -1.8 9.5 0C6.1 1.8 1.9 2.2 1.9 0Z" transform="rotate(49.4)" fill="url(#rp0)"/><path d="M-0.5 0C-0.5 -2.4 4.1 -2.0 7.9 0C4.1 2.0 -0.5 2.4 -0.5 0Z" transform="rotate(275.1)" fill="url(#rp0)"/><path d="M-0.4 0C-0.4 -1.9 3.4 -1.6 6.4 0C3.4 1.6 -0.4 1.9 -0.4 0Z" transform="rotate(134.6)" fill="url(#rp0)"/><path d="M-3.7 0C-3.7 -2.1 0.2 -1.7 3.5 0C0.2 1.7 -3.7 2.1 -3.7 0Z" transform="rotate(3.0)" fill="url(#rp0)"/></g></g><circle cx="246" cy="248" r="7" fill="url(#rc)"/><circle cx="246.500" cy="248" r="1.300" fill="none" stroke="#c33" stroke-width="0.6"/><g filter="url(#shB)"><path d="M448.9 280.3Q450.4 287.0 451.0 294.0Q451.5 301.0 451.2 308.2Q450.8 315.3 448.5 322.1Q446.2 328.9 442.9 335.3Q439.7 341.7 435.7 347.6Q431.7 353.6 427.2 359.1Q422.6 364.6 417.4 369.6Q412.2 374.5 406.0 378.3Q399.9 382.1 393.1 384.3Q386.2 386.6 379.2 387.3Q372.1 388.0 364.9 386.2Q357.8 384.4 351.4 384.6Q345.0 384.8 338.3 386.9Q331.6 388.9 324.4 389.7Q317.3 390.6 310.5 388.5Q303.8 386.4 298.2 382.1Q292.6 377.8 287.7 372.9Q282.9 367.9 278.1 363.3Q273.4 358.6 270.0 352.9Q266.7 347.1 263.8 341.3Q260.9 335.6 258.4 329.7Q255.9 323.9 254.6 317.7Q253.3 311.6 252.5 305.4Q251.8 299.3 252.0 293.1Q252.2 287.0 252.9 281.0Q253.6 275.0 254.2 268.9Q254.7 262.8 255.3 256.4Q255.8 250.1 258.9 244.5Q261.9 239.0 265.3 233.7Q268.7 228.4 272.7 223.5Q276.6 218.6 281.5 214.6Q286.3 210.6 291.9 207.6Q297.4 204.6 303.1 202.0Q308.7 199.3 314.1 195.8Q319.6 192.2 325.8 190.5Q332.1 188.9 338.5 188.5Q345.0 188.1 351.5 188.3Q358.0 188.5 364.3 190.0Q370.6 191.4 376.8 193.4Q382.9 195.5 389.7 196.7Q396.4 197.9 402.6 200.9Q408.7 204.0 414.1 208.2Q419.5 212.5 423.6 218.0Q427.7 223.5 431.0 229.5Q434.4 235.4 436.3 241.9Q438.2 248.4 440.9 254.5Q443.5 260.6 445.5 267.1Q447.5 273.5 448.9 280.3Z" fill="url(#o0)"/></g><path d="M427.5 281.6Q427.3 287.0 425.5 292.2Q423.7 297.4 422.3 302.3Q420.8 307.3 422.2 313.5Q423.7 319.6 424.3 326.4Q424.9 333.1 421.9 338.4Q418.8 343.6 413.8 347.2Q408.8 350.8 404.2 354.5Q399.6 358.1 394.5 361.0Q389.4 363.9 384.1 366.2Q378.7 368.5 373.4 370.8Q368.1 373.1 362.4 374.8Q356.8 376.5 350.9 376.6Q345.0 376.7 339.2 376.1Q333.3 375.5 327.7 374.1Q322.0 372.8 317.4 368.7Q312.8 364.6 310.5 357.7Q308.2 350.8 303.8 348.6Q299.4 346.4 291.4 347.5Q283.4 348.6 277.1 346.3Q270.8 343.9 269.0 337.9Q267.1 331.9 266.2 326.0Q265.3 320.0 263.2 314.7Q261.2 309.5 260.8 303.8Q260.5 298.1 262.5 292.6Q264.5 287.0 265.1 281.8Q265.6 276.5 266.8 271.4Q267.9 266.3 271.5 262.2Q275.2 258.1 279.2 254.7Q283.3 251.4 285.7 247.4Q288.1 243.3 290.3 238.9Q292.5 234.5 294.8 229.5Q297.1 224.5 301.3 221.5Q305.5 218.5 310.0 216.0Q314.6 213.5 319.2 210.9Q323.9 208.3 329.1 206.7Q334.2 205.2 339.6 204.7Q345.0 204.1 350.2 205.9Q355.4 207.7 360.0 210.8Q364.6 214.0 369.4 215.1Q374.3 216.3 379.9 216.5Q385.6 216.7 390.4 219.2Q395.2 221.6 398.2 226.2Q401.2 230.8 404.4 234.9Q407.7 238.9 413.2 241.7Q418.6 244.5 423.4 248.5Q428.1 252.6 428.3 258.6Q428.6 264.6 428.1 270.4Q427.6 276.1 427.5 281.6Z" fill="url(#o1)" filter="url(#shS)"/><path d="M411.0 282.6Q410.6 287.0 412.5 291.6Q414.4 296.1 414.9 301.0Q415.3 305.8 412.8 310.0Q410.3 314.1 407.3 317.6Q404.2 321.2 402.1 325.2Q400.1 329.2 396.6 332.2Q393.2 335.2 389.3 337.5Q385.5 339.8 382.1 342.6Q378.8 345.5 375.4 349.0Q372.1 352.5 367.9 354.7Q363.7 356.8 359.1 358.1Q354.5 359.4 349.8 360.9Q345.0 362.3 340.0 362.4Q335.1 362.5 330.5 360.2Q326.0 357.8 322.0 355.1Q317.9 352.4 313.5 350.8Q309.0 349.3 304.7 347.3Q300.3 345.3 296.8 342.0Q293.3 338.7 290.7 334.7Q288.1 330.7 286.7 326.1Q285.3 321.4 284.5 316.9Q283.6 312.4 280.9 308.7Q278.3 304.9 274.3 300.9Q270.3 296.8 269.6 291.9Q268.8 287.0 272.6 282.5Q276.4 278.0 280.1 274.3Q283.9 270.6 285.3 266.7Q286.6 262.8 288.7 259.3Q290.8 255.7 293.6 252.7Q296.5 249.8 298.3 246.0Q300.2 242.2 302.1 237.8Q303.9 233.5 307.1 230.2Q310.3 226.9 314.7 225.6Q319.0 224.3 323.4 223.5Q327.8 222.7 332.2 222.8Q336.6 222.9 340.8 223.4Q345.0 223.8 348.9 225.7Q352.8 227.7 356.8 227.9Q360.8 228.2 365.1 228.1Q369.4 228.1 373.1 229.9Q376.9 231.8 380.0 234.6Q383.1 237.3 386.4 239.9Q389.6 242.4 393.2 244.8Q396.8 247.2 399.7 250.5Q402.6 253.7 405.5 257.2Q408.5 260.7 410.3 264.9Q412.2 269.0 411.8 273.6Q411.4 278.3 411.0 282.6Z" fill="url(#o2)" filter="url(#shS)"/><path d="M398.2 283.6Q400.4 287.0 400.1 290.6Q399.9 294.2 399.2 297.8Q398.5 301.3 398.1 305.1Q397.7 308.8 395.8 312.0Q393.9 315.2 391.0 317.6Q388.1 320.1 385.8 322.8Q383.5 325.5 380.6 327.6Q377.8 329.7 374.7 331.5Q371.7 333.2 368.8 335.4Q366.0 337.6 363.1 340.6Q360.1 343.5 356.5 345.1Q352.9 346.7 348.9 347.1Q345.0 347.5 341.1 346.7Q337.2 346.0 333.4 345.1Q329.7 344.3 326.1 342.8Q322.5 341.4 318.7 340.2Q315.0 338.9 311.4 337.2Q307.9 335.4 305.3 332.4Q302.6 329.4 301.6 325.2Q300.5 321.1 298.6 318.0Q296.8 314.9 292.9 312.5Q289.0 310.2 286.5 306.8Q283.9 303.4 284.8 299.1Q285.6 294.8 287.1 290.9Q288.5 287.0 290.0 283.5Q291.4 279.9 291.4 276.3Q291.3 272.6 291.4 268.7Q291.5 264.9 292.6 261.1Q293.7 257.4 295.6 254.0Q297.4 250.5 300.6 248.1Q303.7 245.7 307.0 243.8Q310.4 241.9 313.5 239.9Q316.7 238.0 320.5 237.5Q324.3 236.9 328.0 237.2Q331.7 237.5 335.1 237.4Q338.5 237.3 341.7 236.4Q345.0 235.6 348.4 235.2Q351.9 234.7 355.2 235.6Q358.6 236.4 361.7 237.8Q364.8 239.2 368.0 240.3Q371.3 241.4 373.7 244.0Q376.0 246.5 378.7 248.6Q381.3 250.7 385.2 252.0Q389.0 253.2 391.6 255.9Q394.1 258.7 393.9 262.7Q393.7 266.8 393.3 270.5Q392.8 274.2 394.4 277.2Q396.0 280.3 398.2 283.6Z" fill="url(#o3)" filter="url(#shS)"/><path d="M386.7 284.3Q387.0 287.0 387.0 289.8Q387.0 292.5 386.5 295.3Q386.0 298.0 385.0 300.6Q384.0 303.1 383.4 306.0Q382.8 308.8 382.1 311.9Q381.3 314.9 379.5 317.3Q377.7 319.7 375.1 321.3Q372.5 322.8 369.9 324.3Q367.4 325.7 364.8 327.2Q362.3 328.7 359.6 330.1Q356.9 331.5 354.0 332.5Q351.1 333.4 348.1 334.3Q345.0 335.2 341.8 335.3Q338.6 335.4 335.7 334.0Q332.8 332.7 330.3 330.5Q327.9 328.4 325.1 327.2Q322.4 326.1 319.7 324.8Q317.0 323.5 314.9 321.4Q312.8 319.2 310.7 317.1Q308.6 314.9 305.5 313.3Q302.4 311.6 299.5 309.3Q296.7 307.0 295.7 303.7Q294.7 300.5 294.8 297.0Q294.9 293.6 295.4 290.3Q295.9 287.0 296.6 283.9Q297.3 280.7 298.0 277.6Q298.6 274.6 299.2 271.4Q299.7 268.3 301.4 265.5Q303.1 262.8 305.7 260.8Q308.3 258.8 310.9 257.2Q313.6 255.6 315.1 252.9Q316.7 250.2 318.7 247.5Q320.6 244.8 323.6 243.7Q326.6 242.6 329.8 242.3Q332.9 242.0 336.0 241.7Q339.0 241.4 342.0 241.8Q345.0 242.2 347.8 243.2Q350.6 244.2 353.4 244.8Q356.2 245.4 359.0 245.9Q361.8 246.4 364.1 248.1Q366.4 249.9 368.7 251.5Q371.0 253.2 373.6 254.4Q376.3 255.7 378.7 257.5Q381.0 259.4 381.9 262.3Q382.8 265.2 383.9 267.8Q385.1 270.4 385.5 273.2Q385.9 276.0 386.1 278.8Q386.4 281.6 386.7 284.3Z" fill="url(#o4)" filter="url(#shS)"/><path d="M379.1 284.8Q379.2 287.0 379.5 289.3Q379.8 291.6 379.6 293.9Q379.3 296.2 378.0 298.2Q376.7 300.1 375.8 302.2Q374.9 304.2 374.1 306.5Q373.3 308.7 371.8 310.5Q370.4 312.4 368.5 313.7Q366.6 315.1 364.8 316.7Q363.0 318.2 361.2 319.9Q359.3 321.6 356.9 321.9Q354.4 322.2 352.1 322.7Q349.8 323.1 347.4 324.5Q345.0 325.8 342.4 325.9Q339.9 325.9 337.7 324.3Q335.4 322.7 333.1 322.1Q330.7 321.5 328.0 321.3Q325.3 321.1 323.2 319.6Q321.1 318.1 320.5 315.1Q319.9 312.1 319.1 309.8Q318.3 307.5 316.5 306.0Q314.8 304.4 312.6 302.9Q310.5 301.3 309.1 299.1Q307.8 297.0 306.3 294.6Q304.8 292.3 303.4 289.6Q302.0 287.0 301.6 284.1Q301.2 281.2 302.2 278.5Q303.1 275.8 304.4 273.2Q305.7 270.7 307.6 268.6Q309.6 266.6 311.9 265.0Q314.2 263.3 315.9 261.5Q317.6 259.6 319.4 257.8Q321.2 255.9 323.5 254.8Q325.8 253.8 328.2 253.0Q330.6 252.3 333.1 252.1Q335.6 251.8 337.9 251.4Q340.3 251.0 342.6 250.9Q345.0 250.8 347.5 250.2Q349.9 249.6 352.8 248.4Q355.7 247.2 358.4 247.7Q361.1 248.2 362.8 250.6Q364.6 253.0 366.4 254.8Q368.3 256.7 370.2 258.2Q372.2 259.8 373.5 261.9Q374.9 264.1 375.0 266.8Q375.1 269.6 375.3 272.0Q375.6 274.3 376.6 276.3Q377.7 278.2 378.4 280.4Q379.0 282.5 379.1 284.8Z" fill="url(#o5)" filter="url(#shS)"/><path d="M374.8 285.1Q375.1 287.0 374.5 288.9Q374.0 290.8 373.8 292.8Q373.7 294.7 373.5 296.7Q373.4 298.8 372.2 300.4Q371.0 302.0 369.3 303.2Q367.7 304.4 366.9 306.3Q366.1 308.1 364.6 309.3Q363.0 310.5 360.9 310.6Q358.7 310.7 356.9 311.0Q355.0 311.2 353.5 312.2Q352.0 313.1 350.3 314.0Q348.7 315.0 346.8 315.3Q345.0 315.7 343.1 316.1Q341.1 316.4 339.0 316.8Q336.9 317.1 334.9 316.6Q332.9 316.1 331.1 315.1Q329.3 314.2 327.5 313.1Q325.8 312.0 324.5 310.4Q323.3 308.7 322.1 307.1Q321.0 305.4 319.3 304.1Q317.7 302.8 316.3 301.1Q315.0 299.4 315.1 297.2Q315.1 295.0 315.6 292.9Q316.2 290.8 315.8 288.9Q315.4 287.0 314.4 284.9Q313.4 282.8 313.4 280.7Q313.3 278.5 314.4 276.6Q315.4 274.7 316.3 272.8Q317.2 270.9 318.2 269.1Q319.3 267.3 321.0 266.0Q322.7 264.7 324.3 263.4Q326.0 262.2 327.1 260.0Q328.2 257.8 329.7 255.7Q331.2 253.6 333.4 252.9Q335.7 252.1 338.1 252.3Q340.5 252.6 342.7 253.2Q345.0 253.8 347.0 255.0Q349.1 256.2 350.8 257.4Q352.6 258.6 354.2 259.8Q355.8 260.9 357.9 261.0Q359.9 261.1 362.4 261.1Q364.9 261.1 367.0 261.9Q369.2 262.8 370.4 264.7Q371.6 266.6 371.6 269.1Q371.6 271.6 371.3 273.9Q371.0 276.2 371.7 277.9Q372.4 279.7 373.5 281.4Q374.6 283.1 374.8 285.1Z" fill="url(#o6)" filter="url(#shS)"/><path d="M369.9 284.2Q370.4 287.0 370.6 289.9Q370.7 292.9 369.1 295.4Q367.6 297.9 365.6 299.8Q363.6 301.8 361.5 303.4Q359.4 305.0 357.5 307.0Q355.6 309.0 353.0 309.8Q350.4 310.5 347.7 310.0Q345.0 309.5 342.4 309.7Q339.8 309.8 337.1 309.5Q334.3 309.2 332.1 307.6Q329.9 306.0 327.8 304.2Q325.7 302.4 325.0 299.7Q324.3 297.0 322.6 294.7Q320.8 292.5 319.4 289.8Q318.0 287.0 318.1 284.0Q318.3 280.9 319.9 278.3Q321.5 275.7 323.8 273.8Q326.1 271.9 327.8 269.8Q329.5 267.6 331.8 266.0Q334.1 264.3 336.4 262.0Q338.8 259.8 341.9 259.0Q345.0 258.3 348.0 259.3Q351.1 260.3 353.9 261.4Q356.8 262.5 359.5 264.0Q362.2 265.5 363.4 268.4Q364.7 271.3 365.9 273.8Q367.2 276.3 368.4 278.9Q369.5 281.4 369.9 284.2Z" fill="url(#o7)" filter="url(#shS)"/><path d="M365.1 284.6Q364.7 287.0 364.6 289.2Q364.5 291.5 364.6 294.0Q364.7 296.5 363.6 298.7Q362.4 300.9 360.6 302.6Q358.7 304.2 356.3 304.8Q353.8 305.3 351.5 305.1Q349.1 305.0 347.1 304.8Q345.0 304.7 343.0 304.8Q340.9 304.9 338.6 305.0Q336.2 305.2 334.2 304.2Q332.1 303.2 330.9 301.2Q329.6 299.2 328.4 297.4Q327.1 295.6 326.4 293.5Q325.8 291.4 325.4 289.2Q325.0 287.0 324.9 284.7Q324.9 282.4 326.1 280.5Q327.4 278.5 328.3 276.5Q329.3 274.4 330.4 272.3Q331.6 270.1 333.4 268.5Q335.3 266.8 337.7 266.2Q340.1 265.6 342.6 265.8Q345.0 266.0 347.3 266.5Q349.6 266.9 352.1 267.0Q354.5 267.2 356.8 268.3Q359.1 269.3 361.4 270.7Q363.7 272.1 364.3 274.8Q364.9 277.4 365.2 279.9Q365.6 282.3 365.1 284.6Z" fill="url(#o8)" filter="url(#shS)"/><path d="M362.6 284.9Q361.8 287.0 362.1 289.0Q362.3 291.0 361.7 292.8Q361.0 294.7 359.4 296.0Q357.9 297.3 357.0 299.2Q356.2 301.0 354.6 302.3Q353.0 303.6 351.0 304.0Q349.0 304.3 347.0 304.2Q345.0 304.2 343.2 303.4Q341.4 302.7 340.0 301.4Q338.7 300.1 337.4 299.1Q336.1 298.2 334.5 297.4Q332.8 296.7 331.3 295.5Q329.7 294.4 329.3 292.5Q328.8 290.7 328.2 288.9Q327.7 287.0 328.8 285.3Q329.9 283.6 330.2 281.8Q330.6 280.1 331.2 278.2Q331.7 276.4 333.2 275.2Q334.7 274.0 336.4 273.5Q338.2 272.9 339.7 271.8Q341.3 270.8 343.1 270.0Q345.0 269.2 347.0 269.3Q349.0 269.5 350.9 270.1Q352.8 270.7 354.5 271.9Q356.1 273.1 357.4 274.5Q358.8 276.0 360.3 277.5Q361.8 278.9 362.6 280.9Q363.3 282.8 362.6 284.9Z" fill="url(#o9)" filter="url(#shS)"/><path d="M359.6 285.4Q359.8 287.0 359.4 288.6Q358.9 290.2 358.4 291.7Q357.9 293.2 357.2 294.7Q356.5 296.2 355.6 297.7Q354.7 299.2 353.2 300.0Q351.7 300.9 349.9 300.7Q348.1 300.5 346.5 300.8Q345.0 301.1 343.5 300.7Q341.9 300.4 340.5 299.8Q339.1 299.2 337.8 298.4Q336.5 297.6 335.5 296.5Q334.5 295.4 333.7 294.1Q333.0 292.8 333.0 291.3Q333.0 289.7 332.6 288.4Q332.1 287.0 331.9 285.5Q331.7 284.0 332.1 282.5Q332.6 281.0 333.6 279.8Q334.5 278.6 335.8 277.9Q337.1 277.1 338.3 276.3Q339.5 275.5 340.7 274.5Q341.9 273.4 343.5 273.3Q345.0 273.2 346.5 273.5Q348.0 273.8 349.6 273.9Q351.2 274.0 352.7 274.8Q354.2 275.5 355.3 276.7Q356.4 277.9 357.1 279.4Q357.7 280.9 358.6 282.3Q359.4 283.7 359.6 285.4Z" fill="url(#o10)" filter="url(#shS)"/><path d="M356.0 285.8Q356.3 287.0 356.5 288.3Q356.7 289.7 356.7 291.1Q356.6 292.6 355.5 293.6Q354.5 294.6 353.5 295.5Q352.5 296.4 351.2 296.9Q350.0 297.5 348.9 298.4Q347.8 299.3 346.4 299.2Q345.0 299.0 343.7 298.5Q342.5 298.0 341.2 297.9Q339.8 297.8 338.6 297.1Q337.4 296.5 336.6 295.4Q335.8 294.3 335.3 293.1Q334.8 291.9 334.9 290.6Q335.0 289.3 334.9 288.1Q334.9 287.0 334.6 285.8Q334.4 284.6 334.8 283.4Q335.2 282.3 335.6 281.1Q336.0 279.8 337.2 279.2Q338.3 278.6 339.2 277.8Q340.2 276.9 341.4 276.9Q342.7 276.9 343.8 276.7Q345.0 276.5 346.2 276.7Q347.3 276.8 348.6 276.9Q349.8 277.0 351.2 277.2Q352.6 277.5 353.7 278.4Q354.8 279.2 355.0 280.6Q355.3 282.0 355.5 283.3Q355.7 284.6 356.0 285.8Z" fill="url(#o11)" filter="url(#shS)"/><path d="M354.2 286.0Q354.2 287.0 354.0 288.0Q353.8 289.0 353.4 289.9Q353.0 290.9 353.0 292.1Q352.9 293.3 352.3 294.3Q351.7 295.4 350.7 296.0Q349.6 296.6 348.4 296.7Q347.2 296.7 346.1 296.5Q345.0 296.3 343.9 296.3Q342.9 296.3 341.7 296.3Q340.5 296.2 339.8 295.4Q339.0 294.5 338.4 293.7Q337.7 292.8 336.8 292.1Q336.0 291.3 335.8 290.2Q335.7 289.1 335.6 288.1Q335.5 287.0 335.8 286.0Q336.0 284.9 336.3 283.9Q336.5 282.9 337.3 282.2Q338.0 281.4 338.8 280.9Q339.6 280.3 340.6 280.0Q341.5 279.7 342.3 279.4Q343.2 279.0 344.1 278.6Q345.0 278.3 346.0 278.1Q347.1 277.8 348.0 278.3Q349.0 278.7 350.0 279.1Q351.1 279.4 351.5 280.4Q352.0 281.4 352.5 282.3Q353.0 283.1 353.6 284.0Q354.1 284.9 354.2 286.0Z" fill="url(#o12)" filter="url(#shS)"/><path d="M351.9 286.2Q351.9 287.0 352.2 287.8Q352.4 288.7 352.4 289.6Q352.3 290.5 351.9 291.3Q351.5 292.1 350.7 292.7Q350.0 293.2 349.1 293.5Q348.2 293.7 347.5 294.2Q346.7 294.6 345.9 294.7Q345.0 294.8 344.0 295.1Q343.1 295.4 342.3 294.8Q341.5 294.3 340.6 293.9Q339.8 293.5 339.0 293.0Q338.3 292.4 338.1 291.4Q338.0 290.4 337.8 289.5Q337.6 288.7 337.4 287.8Q337.2 287.0 337.1 286.1Q336.9 285.2 337.3 284.3Q337.6 283.4 338.3 282.8Q339.0 282.2 339.8 281.9Q340.6 281.5 341.3 281.1Q341.9 280.6 342.7 280.3Q343.4 280.0 344.2 279.7Q345.0 279.4 345.8 279.8Q346.6 280.1 347.4 280.2Q348.2 280.4 348.9 280.8Q349.5 281.3 350.1 281.9Q350.7 282.5 351.2 283.1Q351.8 283.7 351.9 284.6Q352.0 285.4 351.9 286.2Z" fill="url(#o13)" filter="url(#shS)"/><circle cx="345" cy="287" r="8" fill="url(#oc)" opacity="0.7"/><g filter="url(#shB)"><path d="M312.4 325.6Q312.6 330.0 312.1 334.4Q311.5 338.8 310.2 342.9Q308.8 347.1 307.2 351.1Q305.6 355.1 303.7 359.0Q301.8 362.8 299.5 366.4Q297.1 370.0 294.4 373.3Q291.6 376.6 288.6 379.7Q285.5 382.8 281.9 385.2Q278.3 387.6 274.3 389.4Q270.3 391.2 266.2 392.4Q262.1 393.7 257.8 394.2Q253.5 394.7 249.3 394.7Q245.0 394.7 240.8 394.5Q236.5 394.3 232.3 393.6Q228.1 392.9 224.1 391.7Q220.0 390.4 216.1 388.6Q212.2 386.7 208.6 384.5Q204.9 382.3 201.6 379.4Q198.4 376.6 195.5 373.4Q192.5 370.3 189.5 367.0Q186.5 363.7 184.4 359.9Q182.2 356.0 180.9 351.8Q179.6 347.5 178.8 343.2Q178.0 338.8 178.2 334.4Q178.4 330.0 179.4 325.8Q180.5 321.5 182.3 317.6Q184.0 313.7 186.7 310.3Q189.3 306.9 191.3 303.5Q193.3 300.1 195.6 297.0Q197.9 293.9 200.6 291.0Q203.2 288.2 205.9 285.4Q208.6 282.6 211.5 279.8Q214.4 277.0 217.8 274.8Q221.2 272.6 225.1 271.2Q228.9 269.9 232.9 269.0Q236.9 268.1 240.9 268.0Q245.0 267.8 249.0 268.2Q253.1 268.5 257.1 269.3Q261.1 270.1 265.0 271.2Q268.9 272.4 272.5 274.2Q276.2 276.0 279.7 278.1Q283.2 280.2 286.5 282.7Q289.8 285.2 293.3 287.7Q296.8 290.3 299.5 293.6Q302.3 296.9 304.6 300.6Q306.9 304.4 308.7 308.4Q310.5 312.5 311.4 316.8Q312.2 321.1 312.4 325.6Z" fill="url(#g0)"/></g><path d="M296.9 326.7Q297.9 330.0 297.4 333.4Q296.8 336.8 295.8 340.1Q294.9 343.4 294.9 347.0Q294.9 350.7 294.7 354.6Q294.4 358.5 292.3 361.6Q290.1 364.6 286.4 366.2Q282.8 367.8 279.5 369.3Q276.2 370.7 273.7 373.1Q271.2 375.4 268.6 377.9Q265.9 380.5 262.8 382.7Q259.7 384.8 256.1 386.2Q252.6 387.6 248.8 387.2Q245.0 386.9 241.5 384.8Q238.1 382.7 234.9 381.2Q231.7 379.7 228.1 379.6Q224.4 379.6 220.7 379.1Q216.9 378.7 213.9 376.5Q211.0 374.3 209.0 371.2Q207.0 368.0 205.6 364.7Q204.2 361.3 202.9 358.2Q201.6 355.1 200.0 352.2Q198.4 349.3 196.8 346.3Q195.2 343.3 194.3 340.1Q193.5 336.8 192.7 333.4Q191.8 330.0 189.8 326.2Q187.9 322.5 186.9 318.3Q185.9 314.2 187.8 310.6Q189.6 307.1 193.0 304.5Q196.4 301.9 199.3 299.6Q202.3 297.2 204.6 294.6Q206.9 291.9 209.9 290.1Q212.9 288.2 216.6 287.8Q220.4 287.3 223.6 286.6Q226.7 285.9 229.9 285.5Q233.0 285.1 236.0 284.9Q239.0 284.7 242.0 283.7Q245.0 282.7 248.3 281.0Q251.7 279.4 255.1 279.3Q258.6 279.2 261.4 281.3Q264.3 283.4 266.8 285.7Q269.3 287.9 272.2 289.3Q275.2 290.7 278.6 291.8Q282.0 293.0 285.2 294.9Q288.3 296.7 290.5 299.6Q292.7 302.5 293.4 306.1Q294.1 309.7 294.4 313.2Q294.6 316.7 295.2 320.0Q295.8 323.3 296.9 326.7Z" fill="url(#g1)" filter="url(#shG)"/><path d="M286.6 327.2Q285.6 330.0 285.9 332.7Q286.2 335.4 286.9 338.4Q287.5 341.4 286.6 344.1Q285.7 346.9 283.9 349.2Q282.1 351.4 281.2 354.3Q280.3 357.1 278.7 359.6Q277.1 362.1 274.4 363.4Q271.7 364.7 268.6 365.2Q265.5 365.6 262.9 366.2Q260.3 366.8 257.9 368.1Q255.5 369.3 253.1 371.3Q250.7 373.2 247.8 375.6Q245.0 378.0 241.7 379.2Q238.4 380.4 235.3 379.1Q232.2 377.8 229.7 375.4Q227.2 373.0 224.8 371.1Q222.4 369.2 220.2 367.2Q217.9 365.3 216.4 362.7Q214.9 360.1 213.3 357.8Q211.6 355.6 209.6 353.6Q207.5 351.6 206.6 349.0Q205.7 346.3 205.5 343.5Q205.3 340.6 204.1 338.1Q203.0 335.5 201.6 332.8Q200.2 330.0 200.5 327.1Q200.9 324.2 202.1 321.5Q203.4 318.8 203.5 315.9Q203.6 312.9 203.9 309.7Q204.3 306.5 206.2 304.1Q208.2 301.8 210.8 300.1Q213.4 298.4 215.6 296.5Q217.9 294.7 220.1 292.6Q222.3 290.6 224.8 288.9Q227.3 287.2 230.1 286.2Q233.0 285.3 236.1 285.3Q239.1 285.3 242.1 286.8Q245.0 288.2 247.5 289.9Q250.0 291.7 252.6 291.8Q255.2 292.0 257.7 292.5Q260.3 293.0 262.3 294.7Q264.4 296.4 266.4 298.0Q268.4 299.5 270.9 300.5Q273.5 301.5 275.8 303.0Q278.1 304.6 279.6 306.9Q281.1 309.2 282.9 311.3Q284.7 313.5 286.3 316.0Q287.9 318.5 287.7 321.5Q287.5 324.4 286.6 327.2Z" fill="url(#g2)" filter="url(#shG)"/><path d="M278.6 327.8Q278.4 330.0 278.3 332.2Q278.3 334.4 278.4 336.7Q278.5 339.0 277.2 340.9Q275.9 342.8 273.9 344.2Q271.9 345.5 271.0 347.4Q270.1 349.3 270.0 352.1Q269.8 354.8 268.7 357.1Q267.6 359.4 265.5 360.7Q263.5 362.0 261.3 363.2Q259.2 364.3 257.1 365.7Q255.0 367.2 252.5 367.6Q250.0 367.9 247.5 367.6Q245.0 367.2 242.7 366.4Q240.3 365.6 238.2 364.3Q236.2 363.0 234.2 362.0Q232.2 360.9 229.9 360.6Q227.5 360.2 225.2 359.6Q222.8 359.0 221.0 357.4Q219.3 355.7 218.0 353.7Q216.7 351.7 215.1 350.0Q213.5 348.2 211.8 346.3Q210.1 344.4 209.0 342.2Q207.8 340.0 207.0 337.5Q206.2 335.1 205.9 332.6Q205.5 330.0 206.7 327.6Q207.9 325.1 210.0 323.2Q212.1 321.2 213.1 319.2Q214.1 317.2 214.2 314.7Q214.3 312.3 215.5 310.3Q216.7 308.2 218.7 307.0Q220.8 305.8 222.5 304.3Q224.1 302.8 225.4 300.6Q226.7 298.4 228.7 296.9Q230.7 295.4 233.1 294.9Q235.4 294.4 237.8 293.8Q240.2 293.2 242.6 292.9Q245.0 292.6 247.5 292.6Q249.9 292.6 252.5 292.6Q255.0 292.6 257.4 293.6Q259.7 294.5 261.4 296.7Q263.0 298.8 264.1 301.3Q265.1 303.7 266.4 305.5Q267.7 307.3 269.5 308.6Q271.3 309.8 272.5 311.6Q273.8 313.4 274.6 315.4Q275.5 317.4 276.6 319.3Q277.7 321.3 278.2 323.4Q278.8 325.5 278.6 327.8Z" fill="url(#g3)" filter="url(#shG)"/><path d="M270.6 326.9Q269.4 330.0 270.7 333.1Q272.0 336.2 271.2 339.2Q270.4 342.3 268.6 344.8Q266.9 347.4 264.9 350.0Q263.0 352.6 260.0 353.7Q256.9 354.7 254.0 355.7Q251.1 356.7 248.0 357.8Q245.0 359.0 241.7 359.1Q238.3 359.3 235.2 358.0Q232.1 356.7 229.4 354.9Q226.6 353.0 225.0 350.2Q223.3 347.3 220.0 345.5Q216.8 343.6 216.0 340.2Q215.1 336.8 214.2 333.4Q213.4 330.0 215.4 326.9Q217.4 323.7 217.4 320.2Q217.3 316.7 218.7 313.4Q220.2 310.2 223.9 309.2Q227.6 308.2 230.4 306.9Q233.2 305.6 235.9 303.6Q238.5 301.7 241.8 300.4Q245.0 299.2 248.4 299.6Q251.9 299.9 255.1 301.2Q258.2 302.5 260.9 304.6Q263.5 306.8 266.9 308.3Q270.3 309.8 270.9 313.5Q271.5 317.3 271.6 320.6Q271.8 323.9 270.6 326.9Z" fill="url(#g4)" filter="url(#shG)"/><path d="M271.1 327.0Q270.8 330.0 269.4 332.6Q268.0 335.3 266.6 337.5Q265.1 339.7 263.4 341.5Q261.6 343.3 259.9 344.9Q258.3 346.6 256.6 348.6Q254.9 350.5 252.3 350.8Q249.8 351.0 247.4 352.6Q245.0 354.2 242.1 354.9Q239.2 355.5 237.0 353.3Q234.9 351.0 233.0 349.1Q231.2 347.3 229.7 345.4Q228.2 343.4 225.6 342.0Q222.9 340.6 222.1 338.0Q221.3 335.4 220.4 332.7Q219.6 330.0 219.8 327.1Q219.9 324.3 221.2 321.7Q222.6 319.2 223.9 316.7Q225.3 314.3 227.6 312.6Q229.8 311.0 232.4 310.1Q235.0 309.3 237.1 307.1Q239.3 304.9 242.1 305.2Q245.0 305.5 247.5 306.7Q250.1 307.9 252.8 308.0Q255.5 308.1 257.7 309.8Q259.8 311.5 262.0 313.0Q264.3 314.6 265.8 316.9Q267.3 319.3 269.3 321.6Q271.3 324.0 271.1 327.0Z" fill="url(#g5)" filter="url(#shG)"/><path d="M264.1 327.8Q263.9 330.0 263.8 332.1Q263.8 334.3 263.6 336.6Q263.3 338.8 262.4 341.0Q261.6 343.2 259.6 344.5Q257.7 345.9 255.3 346.2Q252.9 346.5 251.0 347.3Q249.1 348.1 247.1 347.9Q245.0 347.8 242.9 348.2Q240.7 348.7 238.8 347.8Q236.9 346.9 235.4 345.4Q234.0 343.8 231.8 343.0Q229.7 342.2 228.6 340.3Q227.6 338.4 227.4 336.2Q227.2 334.1 226.7 332.0Q226.1 330.0 225.6 327.7Q225.0 325.4 225.5 323.1Q225.9 320.8 227.4 319.0Q228.8 317.1 230.5 315.6Q232.2 314.0 234.1 312.6Q235.9 311.2 238.3 310.9Q240.6 310.7 242.8 310.6Q245.0 310.5 247.0 311.6Q249.0 312.6 251.2 312.6Q253.4 312.6 256.1 312.6Q258.8 312.6 260.1 314.8Q261.4 316.9 262.4 319.0Q263.4 321.1 263.8 323.4Q264.3 325.6 264.1 327.8Z" fill="url(#g6)" filter="url(#shG)"/><path d="M260.5 328.2Q260.1 330.0 260.1 331.7Q260.1 333.4 259.9 335.2Q259.6 337.0 258.8 338.7Q258.0 340.3 257.1 342.2Q256.3 344.1 254.5 345.0Q252.6 345.9 250.7 346.3Q248.8 346.7 246.9 345.7Q245.0 344.8 243.3 344.7Q241.7 344.6 240.2 343.8Q238.8 342.9 237.4 342.1Q236.0 341.3 234.2 340.7Q232.3 340.1 231.4 338.6Q230.4 337.0 230.4 335.2Q230.3 333.4 230.0 331.7Q229.6 330.0 229.6 328.2Q229.7 326.5 230.3 324.9Q230.9 323.2 231.8 321.7Q232.7 320.2 234.0 319.0Q235.3 317.8 236.4 316.1Q237.5 314.4 239.3 313.6Q241.1 312.7 243.0 312.5Q245.0 312.3 246.6 314.1Q248.2 315.8 250.0 315.9Q251.7 316.0 253.8 316.2Q255.9 316.4 257.3 317.7Q258.7 319.1 259.5 320.9Q260.2 322.7 260.5 324.5Q260.8 326.4 260.5 328.2Z" fill="url(#g7)" filter="url(#shG)"/><path d="M258.8 328.3Q257.8 330.0 257.7 331.4Q257.5 332.9 257.1 334.2Q256.7 335.6 255.8 336.8Q254.9 337.9 254.2 339.3Q253.6 340.8 252.3 341.7Q251.1 342.7 249.6 343.2Q248.1 343.8 246.6 343.7Q245.0 343.6 243.5 343.3Q242.0 343.0 240.6 342.6Q239.2 342.1 237.9 341.4Q236.6 340.6 236.0 339.1Q235.5 337.6 234.7 336.4Q234.0 335.3 233.9 333.9Q233.8 332.6 232.7 331.3Q231.6 330.0 232.2 328.6Q232.7 327.2 233.3 325.9Q233.9 324.7 234.3 323.2Q234.6 321.7 235.8 320.8Q236.9 319.9 238.2 319.2Q239.5 318.6 240.9 318.2Q242.2 317.8 243.6 317.1Q245.0 316.4 246.6 316.2Q248.2 316.0 249.6 316.8Q251.0 317.5 252.0 318.7Q253.0 320.0 254.2 320.8Q255.5 321.6 256.5 322.8Q257.5 324.0 258.6 325.3Q259.7 326.6 258.8 328.3Z" fill="url(#g8)" filter="url(#shG)"/><path d="M256.1 328.7Q256.3 330.0 256.3 331.3Q256.3 332.6 255.4 333.6Q254.5 334.6 253.9 335.6Q253.4 336.7 252.6 337.6Q251.7 338.4 250.8 339.2Q249.9 340.1 248.6 340.4Q247.4 340.7 246.2 340.7Q245.0 340.8 243.8 340.6Q242.6 340.5 241.4 340.3Q240.2 340.1 238.9 339.7Q237.6 339.3 236.7 338.3Q235.8 337.3 235.2 336.2Q234.6 335.0 234.6 333.7Q234.6 332.4 235.2 331.2Q235.8 330.0 236.0 329.0Q236.1 328.0 235.9 326.7Q235.7 325.5 236.2 324.5Q236.7 323.4 237.5 322.5Q238.2 321.5 239.3 321.0Q240.4 320.4 241.5 319.8Q242.5 319.3 243.8 319.3Q245.0 319.4 246.1 319.9Q247.2 320.4 248.2 320.8Q249.2 321.2 250.5 321.4Q251.7 321.6 253.0 322.1Q254.3 322.6 255.0 323.7Q255.7 324.9 255.8 326.2Q256.0 327.5 256.1 328.7Z" fill="url(#g9)" filter="url(#shG)"/><path d="M253.9 329.0Q253.7 330.0 253.5 330.9Q253.3 331.9 253.0 332.8Q252.7 333.7 252.6 334.8Q252.4 335.9 251.8 336.8Q251.1 337.7 250.2 338.3Q249.3 338.9 248.2 338.9Q247.0 338.9 246.0 338.9Q245.0 338.9 244.1 338.5Q243.2 338.1 242.1 338.1Q241.1 338.1 240.4 337.3Q239.7 336.6 238.9 336.0Q238.1 335.5 237.2 334.8Q236.3 334.2 236.0 333.2Q235.8 332.1 235.5 331.1Q235.3 330.0 235.7 329.0Q236.0 327.9 236.5 327.1Q237.1 326.2 237.9 325.6Q238.8 325.1 239.4 324.4Q239.9 323.6 240.7 323.2Q241.5 322.8 242.3 322.3Q243.1 321.8 244.1 321.8Q245.0 321.8 246.0 321.6Q247.0 321.5 247.8 321.9Q248.6 322.4 249.7 322.6Q250.7 322.8 251.4 323.6Q252.2 324.3 252.5 325.2Q252.9 326.2 253.5 327.1Q254.1 327.9 253.9 329.0Z" fill="url(#g10)" filter="url(#shG)"/><path d="M251.5 329.2Q251.5 330.0 251.8 330.8Q252.0 331.6 252.1 332.6Q252.3 333.5 251.8 334.3Q251.3 335.0 250.5 335.5Q249.8 336.0 248.9 336.2Q248.0 336.3 247.3 336.6Q246.6 337.0 245.8 337.4Q245.0 337.8 244.2 337.5Q243.4 337.2 242.5 337.1Q241.6 337.1 241.0 336.4Q240.4 335.8 239.9 335.1Q239.5 334.4 239.0 333.7Q238.6 333.1 238.4 332.3Q238.1 331.6 237.8 330.8Q237.4 330.0 237.3 329.1Q237.2 328.2 237.5 327.4Q237.8 326.5 238.4 325.9Q239.0 325.2 239.8 324.9Q240.7 324.6 241.4 324.2Q242.0 323.9 242.8 323.6Q243.5 323.4 244.2 323.4Q245.0 323.4 245.8 323.2Q246.6 323.0 247.3 323.5Q247.9 323.9 248.7 324.2Q249.4 324.4 250.1 324.9Q250.8 325.4 251.1 326.1Q251.4 326.9 251.5 327.7Q251.6 328.5 251.5 329.2Z" fill="url(#g11)" filter="url(#shG)"/><path d="M250.5 329.4Q250.5 330.0 250.4 330.6Q250.4 331.2 250.4 331.9Q250.4 332.6 250.1 333.2Q249.8 333.8 249.5 334.5Q249.2 335.2 248.4 335.3Q247.6 335.4 246.9 335.5Q246.3 335.6 245.6 335.9Q245.0 336.2 244.3 336.0Q243.7 335.8 243.0 335.6Q242.3 335.5 241.6 335.3Q240.9 335.1 240.5 334.5Q240.2 333.8 239.9 333.2Q239.7 332.6 239.6 331.9Q239.4 331.3 239.1 330.6Q238.9 330.0 238.8 329.3Q238.7 328.6 239.1 328.0Q239.5 327.3 239.8 326.8Q240.2 326.2 240.8 325.9Q241.4 325.5 241.9 324.9Q242.3 324.3 242.9 324.2Q243.6 324.0 244.3 324.1Q245.0 324.3 245.7 324.2Q246.4 324.1 247.0 324.3Q247.6 324.5 248.0 325.1Q248.4 325.7 248.9 326.1Q249.3 326.6 249.6 327.1Q250.0 327.6 250.2 328.2Q250.5 328.7 250.5 329.4Z" fill="url(#g12)" filter="url(#shG)"/><path d="M249.7 329.5Q249.9 330.0 249.7 330.5Q249.4 331.0 249.2 331.5Q249.0 331.9 248.8 332.4Q248.5 332.8 248.2 333.2Q247.9 333.7 247.5 334.0Q247.1 334.4 246.6 334.6Q246.1 334.9 245.6 335.1Q245.0 335.2 244.5 334.9Q244.0 334.6 243.4 334.5Q242.8 334.5 242.3 334.3Q241.7 334.1 241.3 333.7Q240.9 333.3 240.7 332.7Q240.5 332.2 240.4 331.6Q240.2 331.1 240.3 330.5Q240.5 330.0 240.2 329.4Q239.9 328.8 240.1 328.3Q240.3 327.7 240.8 327.4Q241.2 327.0 241.6 326.6Q242.0 326.3 242.4 325.8Q242.8 325.4 243.3 325.1Q243.8 324.8 244.4 324.9Q245.0 325.0 245.6 325.0Q246.1 325.1 246.6 325.4Q247.0 325.8 247.5 326.0Q248.0 326.3 248.4 326.6Q248.8 326.9 249.1 327.4Q249.3 327.9 249.4 328.5Q249.4 329.0 249.7 329.5Z" fill="url(#g13)" filter="url(#shG)"/><rect x="169.500" y="176.300" width="162.500" height="230.700" fill="none" stroke="#2e2622" stroke-width="1.200"/></svg>
<!-- toolbar -->
<div class="a" style="left:4px;top:62px;width:40px;height:458px;background:#5a5a5a"></div>
<div class="a" style="left:4px;top:62px;width:40px;height:7px;background:#404040"></div><div class="a" style="left:4px;top:69px;width:40px;height:1px;background:#222"></div>
<svg class="a" style="left:6px;top:63px" width="8" height="5"><path d="M2.500 0.500L0.500 2.500 2.500 4.500M6 0.500L4 2.500 6 4.500" fill="none" stroke="#ddd" stroke-width="1.100"/></svg>
<div class="a" style="left:4px;top:70px;width:40px;height:309px;background:#d6d6d6"></div>
<div class="a" style="left:7px;top:73px;width:34px;height:2px;background:repeating-linear-gradient(90deg,#b0b0b0 0 1px,transparent 1px 2px)"></div>
<svg class="a" style="left:0;top:60px" width="50" height="330" viewBox="0 60 50 330"><path d="M7 111.5H41" stroke="#bdbdbd" stroke-width="1"/><path d="M7 112.5H41" stroke="#e6e6e6" stroke-width="1"/><path d="M7 172.5H41" stroke="#bdbdbd" stroke-width="1"/><path d="M7 173.5H41" stroke="#e6e6e6" stroke-width="1"/><path d="M7 217.5H41" stroke="#bdbdbd" stroke-width="1"/><path d="M7 218.5H41" stroke="#e6e6e6" stroke-width="1"/><path d="M7 266.5H41" stroke="#bdbdbd" stroke-width="1"/><path d="M7 267.5H41" stroke="#e6e6e6" stroke-width="1"/><path d="M7 297.5H41" stroke="#bdbdbd" stroke-width="1"/><path d="M7 298.5H41" stroke="#e6e6e6" stroke-width="1"/><path d="M7 334.5H41" stroke="#bdbdbd" stroke-width="1"/><path d="M7 335.5H41" stroke="#e6e6e6" stroke-width="1"/><path d="M7 360.5H41" stroke="#bdbdbd" stroke-width="1"/><path d="M7 361.5H41" stroke="#e6e6e6" stroke-width="1"/><rect x="7.500" y="82.500" width="15" height="13" rx="2" fill="#c4c4c4" stroke="#5a5a5a"/><path d="M12.500 84v9l2.200-2 1.500 3 1.300-.6-1.500-3h3z" fill="#111"/><path d="M29.500 84v9l2.200-2 1.500 3 1.300-.6-1.500-3h3z" fill="#fff" stroke="#111" stroke-width="0.9"/><path d="M40 97h-2.500l2.500-2.500z" fill="#111"/><path d="M12 100l7 7" stroke="#222" stroke-width="1.600"/><path d="M10 97l1.500 1.500M13 96v2M9 100h2M14.500 98l-1 1" stroke="#555" stroke-width="0.8"/><ellipse cx="32.500" cy="101" rx="5.500" ry="3.500" fill="none" stroke="#222" stroke-width="1.300"/><path d="M28.500 103c-1.500 1-1 3 0 3.500" stroke="#222" fill="none"/><path d="M33 102v5.500l1.400-1.200 1 2 .9-.4-1-2h2z" fill="#fff" stroke="#111" stroke-width="0.7"/><path d="M14.500 114l3 5.500-1.200 3.500h-3.600l-1.200-3.500z" fill="#fff" stroke="#111" stroke-width="1"/><path d="M14.500 117v4" stroke="#111"/><rect x="12" y="123.500" width="5" height="2" fill="#111"/><path d="M22 128h-2.500l2.500-2.500z" fill="#111"/><text x="27.500" y="126" font-family="Liberation Serif,serif" font-size="15" font-weight="bold" fill="#111">T</text><path d="M40 128h-2.500l2.500-2.500z" fill="#111"/><path d="M9 130l10 10" stroke="#111" stroke-width="1.200"/><path d="M22 142h-2.500l2.500-2.500z" fill="#111"/><rect x="27.500" y="130.500" width="10" height="8" fill="#e8e8e8" stroke="#444"/><rect x="29" y="132" width="8" height="6" fill="#bbb" opacity="0.6"/><path d="M40 142h-2.500l2.500-2.500z" fill="#111"/><path d="M19 144l-6 6" stroke="#333" stroke-width="2.200"/><path d="M13 150l-3.500 4" stroke="#111" stroke-width="1.600"/><path d="M37 144l-7 7" stroke="#eee" stroke-width="3"/><path d="M37.500 143l1.500 1.500-7.500 7.500-2.500 1 1-2.500z" fill="none" stroke="#111" stroke-width="0.9"/><path d="M29 153l1-2.500 1.500 1.500z" fill="#111"/><path d="M40 157h-2.500l2.500-2.500z" fill="#111"/><path d="M9.500 161.500h8v6h-8z" fill="#fff" stroke="#111" stroke-width="1.200"/><path d="M20 158l-6 6" stroke="#111" stroke-width="1.800"/><path d="M9 168l9 0" stroke="#111" stroke-width="1"/><path d="M27 167l5-6h6l-5 6z" fill="#fff" stroke="#111" stroke-width="1"/><path d="M27 167v1.500h6l5-6v-1.500" fill="#ccc" stroke="#111" stroke-width="0.8"/><path d="M40 171h-2.500l2.500-2.500z" fill="#111"/><path d="M18 178a4.500 4.500 0 1 0 1 5" fill="none" stroke="#222" stroke-width="1.100" stroke-dasharray="2 1"/><path d="M16 176l3.500 1-2 2.500z" fill="#111"/><path d="M22 187h-2.500l2.500-2.500z" fill="#111"/><rect x="27.500" y="176.500" width="8" height="6" fill="#ccc" stroke="#222"/><rect x="30.500" y="179.500" width="8" height="6" fill="none" stroke="#555" stroke-width="0.8"/><path d="M28.500 177.500l4 3" stroke="#111"/><path d="M40 187h-2.500l2.500-2.500z" fill="#111"/><path d="M9 193c3-4 5 3 8-1s2-3 3-2" fill="none" stroke="#222" stroke-width="1.500"/><path d="M10 198c3-3 4 1 6-1" fill="none" stroke="#444" stroke-width="1.200"/><path d="M17 196l4 4" stroke="#111" stroke-width="1.400"/><rect x="28.500" y="190.500" width="9" height="8" fill="none" stroke="#111" stroke-dasharray="1.500 1.500" stroke-width="1.300"/><path d="M27 189v6l1.500-1.300 1 2 1-.5-1-2h2z" fill="#111"/><circle cx="13" cy="207" r="3.500" fill="#ddd" stroke="#222"/><circle cx="17" cy="205" r="3" fill="#eee" stroke="#222"/><path d="M16 208v6l1.500-1.300 1 2 1-.5-1-2h2z" fill="#fff" stroke="#111" stroke-width="0.7"/><path d="M22 215h-2.500l2.500-2.500z" fill="#111"/><path d="M28 203l5-1.500v12l-5-2.500zM33 201.500l5 3v7l-5 2.500M30.500 202.500v10M28 207h10M35.500 203v10" fill="none" stroke="#333" stroke-width="0.8"/><path d="M40 215h-2.500l2.500-2.500z" fill="#111"/><rect x="9.500" y="222.500" width="10" height="8" fill="#aaa" stroke="#222"/><path d="M9.500 226c3-2 6 2 10 0M14 222.500c-1.500 3 1.500 5 0 8" fill="none" stroke="#fff" stroke-width="0.9"/><defs><linearGradient id="tg"><stop offset="0" stop-color="#fff"/><stop offset="1" stop-color="#111"/></linearGradient></defs><rect x="27.500" y="222.500" width="10" height="8" fill="url(#tg)" stroke="#444" stroke-width="0.8"/><path d="M18.500 236l-7 7-1.500 2.500" stroke="#111" stroke-width="1.600" fill="none"/><path d="M17 234.500l3 3" stroke="#111" stroke-width="2.400"/><path d="M22 246h-2.500l2.500-2.500z" fill="#111"/><rect x="27.500" y="235.500" width="4" height="4" fill="#eee" stroke="#555" stroke-width="0.8"/><circle cx="35.500" cy="244" r="2.300" fill="#eee" stroke="#555" stroke-width="0.8"/><path d="M31 240l3 2.500" stroke="#888" stroke-dasharray="1 1"/><rect x="12.500" y="254.500" width="6" height="8" rx="1" fill="#eee" stroke="#111"/><rect x="14" y="257" width="3" height="3" fill="#666"/><path d="M11 252.500h4v2" fill="none" stroke="#111"/><path d="M8.500 251.500h1M9.500 254h1" stroke="#111"/><path d="M22 264h-2.500l2.500-2.500z" fill="#111"/><path d="M27.500 252v10.500h11" fill="none" stroke="#111"/><rect x="29" y="256" width="2" height="6" fill="#333"/><rect x="32" y="258" width="2" height="4" fill="#333"/><rect x="35" y="254" width="2" height="8" fill="#333"/><path d="M40 264h-2.500l2.500-2.500z" fill="#111"/><rect x="10.500" y="270.500" width="8" height="8" fill="#e4e4e4" stroke="#333"/><path d="M8.500 272.500h12M8.500 276.500h12M12.500 268.500v12M16.500 268.500v12" stroke="#777" stroke-width="0.600"/><path d="M38 268l-9 9" stroke="#111" stroke-width="1.300"/><path d="M31 271l5 1M29 278l2.500-1" stroke="#333" stroke-width="1"/><path d="M34 270l2 5" stroke="#555" stroke-width="0.8"/><path d="M40 279h-2.500l2.500-2.500z" fill="#111"/><path d="M11.500 291.500c-1-2-2.500-3.500-1.500-4s2 1 2.500 1.500v-4.500c0-1 1.300-1 1.300 0v-1c0-1 1.400-1 1.400 0v1c0-1 1.400-1 1.400 0v1.200c0-1 1.300-1 1.300 0v4c0 2-1 3-1.500 4h-4z" fill="#fff" stroke="#111" stroke-width="0.9"/><path d="M22 294h-2.500l2.500-2.500z" fill="#111"/><circle cx="31.500" cy="286.500" r="3.500" fill="#eee" stroke="#111" stroke-width="1.200"/><path d="M34 289.500l4 4.500" stroke="#111" stroke-width="2"/><defs><radialGradient id="tf"><stop offset="0.25" stop-color="#fff"/><stop offset="0.9" stop-color="#e8232d"/></radialGradient></defs><rect x="18.500" y="312.500" width="19" height="19" fill="#fff" stroke="#111"/><rect x="24.500" y="318.500" width="7" height="7" fill="#d6d6d6" stroke="#111"/><path d="M19 331L37 313" stroke="#b01030" stroke-width="1.300"/><rect x="9" y="302" width="19.500" height="19.500" fill="url(#tf)" stroke="#c2202a" stroke-width="1.400"/><path d="M32 303c2 0 3.500 1.500 3.500 3.500" fill="none" stroke="#111" stroke-width="1"/><path d="M30.500 303l2.500-1.500v3zM35.500 308.500l-1.500-2.500h3z" fill="#111"/><rect x="11.500" y="326.500" width="4" height="4" fill="#fff" stroke="#111" stroke-width="0.8"/><rect x="9.500" y="324.500" width="4" height="4" fill="#111"/><rect x="8" y="337.500" width="7" height="7" fill="#e820d0"/><rect x="19.500" y="336.500" width="9" height="9" rx="1.500" fill="#bbb" stroke="#555"/><rect x="21" y="338" width="6" height="6" fill="url(#tf)" stroke="#c22" stroke-width="0.600"/><rect x="32" y="337.500" width="7" height="7" fill="#fff"/><path d="M32 344.500l7-7" stroke="#b01030" stroke-width="1.200"/><rect x="7.500" y="350.500" width="10" height="9" rx="1.500" fill="#bbb" stroke="#555"/><circle cx="12" cy="354" r="2.800" fill="#eee" stroke="#222" stroke-width="0.8"/><rect x="12" y="354.500" width="4" height="4" fill="#888" stroke="#222" stroke-width="0.7"/><circle cx="23" cy="354" r="2.800" fill="#eee" stroke="#222" stroke-width="0.8"/><circle cx="25" cy="356.500" r="2.300" fill="#222"/><circle cx="35" cy="355" r="2.600" fill="#eee" stroke="#999" stroke-width="0.8"/><rect x="16.500" y="369.500" width="9" height="5.500" fill="#eee" stroke="#444"/><rect x="20.500" y="366" width="10" height="6" fill="#fff" stroke="#444"/></svg>
<!-- vertical scrollbar -->
<div class="a" style="left:541px;top:76px;width:9px;height:435px;background:#e9e9e9;border-left:1px solid #c9c9c9"></div>
<div class="dd" style="left:543px;top:81px;border-width:0 2.500px 2.500px 2.500px;border-color:transparent transparent #333 transparent;border-style:solid"></div>
<div class="dd" style="left:543px;top:502px;border-width:2.500px 2.500px 0 2.500px;border-top-color:#333"></div>
<div class="a" style="left:541px;top:286px;width:9px;height:13px;background:#dedede;border:1px solid #b4b4b4;border-radius:1px"></div>
<!-- status bar -->
<div class="a" style="left:45px;top:511px;width:506px;height:9px;background:#dcdcdc"></div>
<div class="a" style="left:46px;top:511px;width:40px;height:9px;background:#fff"></div>
<div class="t" style="left:48px;top:512px;font-size:7.5px;transform:scaleX(0.871);transform-origin:0 0">200%</div>
<div class="dd" style="left:77px;top:515px;border-width:3px 3px 0 3px"></div>
<div class="t" style="left:88px;top:511px;font-size:7px;color:#999">|◀</div>
<div class="t" style="left:100px;top:511px;font-size:7px;color:#999">◀</div>
<div class="a" style="left:108px;top:511px;width:30px;height:9px;background:#fff"></div>
<div class="t" style="left:112px;top:512px;font-size:7.5px">1</div>
<div class="dd" style="left:129px;top:515px;border-width:3px 3px 0 3px"></div>
<div class="t" style="left:142px;top:511px;font-size:7px;color:#999">▶</div>
<div class="t" style="left:151px;top:511px;font-size:7px;color:#999">▶|</div>
<div class="a" style="left:162px;top:511px;width:122px;height:9px;background:#d2d2d2;border:1px solid #c2c2c2"></div>
<div class="t" style="left:209px;top:512px;font-size:7.5px;transform:scaleX(0.875);transform-origin:0 0">Selection</div>
<div class="a" style="left:275px;top:512px;width:0;height:0;border-top:3px solid transparent;border-bottom:3px solid transparent;border-left:4px solid #111"></div>
<div class="a" style="left:285px;top:511px;width:256px;height:9px;background:#ececec"></div>
<div class="a" style="left:288px;top:513px;width:0;height:0;border-top:2px solid transparent;border-bottom:2px solid transparent;border-right:3px solid #333"></div>
<div class="a" style="left:532px;top:513px;width:0;height:0;border-top:2px solid transparent;border-bottom:2px solid transparent;border-left:3px solid #333"></div>
<div class="a" style="left:405px;top:511px;width:11px;height:9px;background:#dedede;border:1px solid #b4b4b4;border-radius:1px"></div>
<div class="a" style="left:541px;top:511px;width:10px;height:9px;background:#f4f4f4"></div>
<!-- bottom/side window borders -->
<div class="a" style="left:0;top:520px;width:700px;height:1px;background:#3a3a3a"></div>
<div class="a" style="left:0;top:521px;width:700px;height:2px;background:#f2f2f2"></div>
<div class="a" style="left:0;top:523px;width:700px;height:1px;background:#a8a8a8"></div>
<div class="a" style="left:0;top:41px;width:1px;height:483px;background:#a8a8a8"></div>
<div class="a" style="left:1px;top:41px;width:2px;height:482px;background:#f2f2f2"></div>
<div class="a" style="left:3px;top:41px;width:1px;height:480px;background:#333"></div>
<div class="a" style="left:696px;top:41px;width:1px;height:480px;background:#777"></div>
<div class="a" style="left:697px;top:41px;width:2px;height:482px;background:#f2f2f2"></div>
<div class="a" style="left:699px;top:41px;width:1px;height:483px;background:#a8a8a8"></div>
<div class="a" style="left:550px;top:62px;width:146px;height:458px;background:#262626"></div>
<div class="a" style="left:550px;top:62px;width:146px;height:7px;background:#3f3f3f"></div>
<svg class="a" style="left:688px;top:63px" width="8" height="5"><path d="M0.500 0.500L2.500 2.500 0.500 4.500M4 0.500L6 2.500 4 4.500" fill="none" stroke="#ddd" stroke-width="1.100"/></svg>
<div class="a" style="left:550px;top:70px;width:146px;height:11px;background:linear-gradient(#8a8a8a,#7a7a7a)"></div>
<div class="a" style="left:551px;top:70px;width:39px;height:12px;background:#d6d6d6;border-left:1px solid #eee;border-top:1px solid #eee"></div>
<svg class="a" style="left:552px;top:73px" width="5" height="7"><path d="M2.500 0L4.500 2.500H0.500zM2.500 7L4.500 4.500H0.500z" fill="#222"/></svg>
<div class="tab" style="left:559px;top:72.7px;color:#222;font-size:7.700px;transform:scaleX(0.827);transform-origin:0 0">COLOR</div>
<div class="a" style="left:590px;top:71px;width:56px;height:10px;background:linear-gradient(#a2a2a2,#8b8b8b);border-right:1px solid #555;border-top:1px solid #b8b8b8"></div>
<div class="tab" style="left:595px;top:72.7px;color:#3a3a3a;font-size:7.700px;transform:scaleX(0.828);transform-origin:0 0">COLOR GUIDE</div>
<svg class="a" style="left:685px;top:73px" width="9" height="7"><path d="M0 2.500h2.500l-1.250 2z" fill="#333"/><path d="M3.500 1.500h5M3.500 3.500h5M3.500 5.500h5" stroke="#333" stroke-width="1"/></svg>
<div class="a" style="left:550px;top:81px;width:146px;height:70px;background:#d6d6d6"></div>
<div class="a" style="left:561px;top:94px;width:13px;height:12px;background:#fff;border:1px solid #555"></div>
<svg class="a" style="left:561px;top:94px" width="13" height="12"><rect x="3.5" y="3.5" width="6" height="5" fill="#d6d6d6" stroke="#555"/><path d="M1 11L12 1" stroke="#c22" stroke-width="1.2"/></svg>
<div class="a" style="left:555px;top:87px;width:14px;height:13px;border:1px solid #a11;background:radial-gradient(circle closest-side,#fff 35%,#e3222d 105%)"></div>
<div class="t" style="left:581px;top:89px;font-size:8px">R</div>
<div class="a" style="left:588px;top:91px;width:71px;height:4px;background:#fff;border:1px solid #333;border-radius:2px"></div>
<div class="a" style="left:661px;top:88px;width:23px;height:11px;background:#fafafa;border:1px solid #e6e6e6"></div>
<div class="t" style="left:581px;top:104px;font-size:8px">G</div>
<div class="a" style="left:588px;top:106px;width:71px;height:4px;background:#fff;border:1px solid #333;border-radius:2px"></div>
<div class="a" style="left:661px;top:103px;width:23px;height:11px;background:#fafafa;border:1px solid #e6e6e6"></div>
<div class="t" style="left:581px;top:119px;font-size:8px">B</div>
<div class="a" style="left:588px;top:121px;width:71px;height:4px;background:#fff;border:1px solid #333;border-radius:2px"></div>
<div class="a" style="left:661px;top:118px;width:23px;height:11px;background:#fafafa;border:1px solid #e6e6e6"></div>
<div class="t" style="left:556px;top:119px;font-size:8px;font-weight:bold">t.</div>
<div class="a" style="left:566px;top:122px;width:9px;height:9px;background:#f01fd0;border:1px solid #333"></div>
<div class="a" style="left:555px;top:135px;width:135px;height:11px;background:#000;border:1px solid #222"></div>
<div class="a" style="left:556px;top:136px;width:9px;height:9px;background:#fff"></div>
<svg class="a" style="left:556px;top:136px" width="9" height="9"><path d="M0 9L9 0" stroke="#d22" stroke-width="1.2"/></svg>
<div class="a" style="left:566px;top:136px;width:113px;height:9px;background:linear-gradient(90deg,#f00,#ff0 17%,#0f0 33%,#0ff 50%,#00f 67%,#f0f 83%,#f00)"></div>
<div class="a" style="left:566px;top:136px;width:113px;height:9px;background:linear-gradient(#fff,rgba(255,255,255,0) 45%,rgba(0,0,0,0) 55%,#000)"></div>
<div class="a" style="left:680px;top:136px;width:9px;height:5px;background:#fff"></div>
<div class="a" style="left:680px;top:141px;width:9px;height:4px;background:#000"></div>
<div class="a" style="left:550px;top:153px;width:146px;height:11px;background:linear-gradient(#8a8a8a,#7a7a7a)"></div>
<div class="a" style="left:551px;top:153px;width:46px;height:12px;background:#d6d6d6;border-left:1px solid #eee;border-top:1px solid #eee"></div>
<div class="tab" style="left:555.3px;top:155.7px;color:#222;font-size:7.700px;transform:scaleX(0.829);transform-origin:0 0">SWATCHES</div>
<div class="a" style="left:597px;top:154px;width:37px;height:10px;background:linear-gradient(#a2a2a2,#8b8b8b);border-right:1px solid #555;border-top:1px solid #b8b8b8"></div>
<div class="tab" style="left:601px;top:155.7px;color:#3a3a3a;font-size:7.700px;transform:scaleX(0.797);transform-origin:0 0">BRUSHES</div>
<div class="a" style="left:634px;top:154px;width:36px;height:10px;background:linear-gradient(#a2a2a2,#8b8b8b);border-right:1px solid #555;border-top:1px solid #b8b8b8"></div>
<div class="tab" style="left:638.3px;top:155.7px;color:#3a3a3a;font-size:7.700px;transform:scaleX(0.814);transform-origin:0 0">SYMBOLS</div>
<svg class="a" style="left:685px;top:156px" width="9" height="7"><path d="M0 2.500h2.500l-1.250 2z" fill="#333"/><path d="M3.500 1.500h5M3.500 3.500h5M3.500 5.500h5" stroke="#333" stroke-width="1"/></svg>
<div class="a" style="left:550px;top:164px;width:146px;height:100px;background:#d6d6d6"></div>
<div class="a" style="left:551.5px;top:165.8px;width:132.8px;height:9.9px;background:#2a2a2a"></div>
<div class="a" style="left:551.5px;top:175.2px;width:132.8px;height:9.9px;background:#2a2a2a"></div>
<div class="a" style="left:551.5px;top:184.7px;width:132.8px;height:9.9px;background:#2a2a2a"></div>
<div class="a" style="left:551.5px;top:194.2px;width:104.4px;height:9.9px;background:#2a2a2a"></div>
<div class="a" style="left:561.0px;top:203.6px;width:104.4px;height:9.9px;background:#2a2a2a"></div>
<div class="a" style="left:561.0px;top:213.1px;width:57.2px;height:9.9px;background:#2a2a2a"></div>
<div class="a" style="left:561.0px;top:222.5px;width:9.9px;height:9.9px;background:#2a2a2a"></div>
<div class="a" style="left:552.0px;top:166.3px;width:8.600px;height:8.600px;background:#fff"></div><svg class="a" style="left:552.0px;top:166.3px" width="9" height="9"><path d="M0 9L9 0" stroke="#d22" stroke-width="1.2"/></svg>
<div class="a" style="left:561.5px;top:166.3px;width:8.600px;height:8.600px;background:#fff"></div><svg class="a" style="left:561.5px;top:166.3px" width="9" height="9"><circle cx="4.5" cy="4.5" r="2.5" fill="none" stroke="#111" stroke-width="1"/><path d="M4.5 0v9M0 4.5h9" stroke="#111" stroke-width="1"/></svg>
<div class="a" style="left:570.9px;top:166.3px;width:8.600px;height:8.600px;background:#ffffff"></div>
<div class="a" style="left:580.4px;top:166.3px;width:8.600px;height:8.600px;background:#000000"></div>
<div class="a" style="left:589.8px;top:166.3px;width:8.600px;height:8.600px;background:#ff0000"></div>
<div class="a" style="left:599.2px;top:166.3px;width:8.600px;height:8.600px;background:#ffff00"></div>
<div class="a" style="left:608.7px;top:166.3px;width:8.600px;height:8.600px;background:#22ee22"></div>
<div class="a" style="left:618.1px;top:166.3px;width:8.600px;height:8.600px;background:#00ffff"></div>
<div class="a" style="left:627.6px;top:166.3px;width:8.600px;height:8.600px;background:#0000ff"></div>
<div class="a" style="left:637.0px;top:166.3px;width:8.600px;height:8.600px;background:#ff00ff"></div>
<div class="a" style="left:646.5px;top:166.3px;width:8.600px;height:8.600px;background:#c1272d"></div>
<div class="a" style="left:656.0px;top:166.3px;width:8.600px;height:8.600px;background:#ed1c24"></div>
<div class="a" style="left:665.4px;top:166.3px;width:8.600px;height:8.600px;background:#f15a24"></div>
<div class="a" style="left:674.9px;top:166.3px;width:8.600px;height:8.600px;background:#f7931e"></div>
<div class="a" style="left:552.0px;top:175.8px;width:8.600px;height:8.600px;background:#fbb03b"></div>
<div class="a" style="left:561.5px;top:175.8px;width:8.600px;height:8.600px;background:#fcee21"></div>
<div class="a" style="left:570.9px;top:175.8px;width:8.600px;height:8.600px;background:#d9e021"></div>
<div class="a" style="left:580.4px;top:175.8px;width:8.600px;height:8.600px;background:#8cc63f"></div>
<div class="a" style="left:589.8px;top:175.8px;width:8.600px;height:8.600px;background:#39b54a"></div>
<div class="a" style="left:599.2px;top:175.8px;width:8.600px;height:8.600px;background:#009245"></div>
<div class="a" style="left:608.7px;top:175.8px;width:8.600px;height:8.600px;background:#006837"></div>
<div class="a" style="left:618.1px;top:175.8px;width:8.600px;height:8.600px;background:#22b573"></div>
<div class="a" style="left:627.6px;top:175.8px;width:8.600px;height:8.600px;background:#00a99d"></div>
<div class="a" style="left:637.0px;top:175.8px;width:8.600px;height:8.600px;background:#29abe2"></div>
<div class="a" style="left:646.5px;top:175.8px;width:8.600px;height:8.600px;background:#0071bc"></div>
<div class="a" style="left:656.0px;top:175.8px;width:8.600px;height:8.600px;background:#2e3192"></div>
<div class="a" style="left:665.4px;top:175.8px;width:8.600px;height:8.600px;background:#1b1464"></div>
<div class="a" style="left:674.9px;top:175.8px;width:8.600px;height:8.600px;background:#662d91"></div>
<div class="a" style="left:552.0px;top:185.2px;width:8.600px;height:8.600px;background:#93278f"></div>
<div class="a" style="left:561.5px;top:185.2px;width:8.600px;height:8.600px;background:#9e005d"></div>
<div class="a" style="left:570.9px;top:185.2px;width:8.600px;height:8.600px;background:#d4145a"></div>
<div class="a" style="left:580.4px;top:185.2px;width:8.600px;height:8.600px;background:#ed1e79"></div>
<div class="a" style="left:589.8px;top:185.2px;width:8.600px;height:8.600px;background:#c7b299"></div>
<div class="a" style="left:599.2px;top:185.2px;width:8.600px;height:8.600px;background:#998675"></div>
<div class="a" style="left:608.7px;top:185.2px;width:8.600px;height:8.600px;background:#736357"></div>
<div class="a" style="left:618.1px;top:185.2px;width:8.600px;height:8.600px;background:#534741"></div>
<div class="a" style="left:627.6px;top:185.2px;width:8.600px;height:8.600px;background:#c69c6d"></div>
<div class="a" style="left:637.0px;top:185.2px;width:8.600px;height:8.600px;background:#a67c52"></div>
<div class="a" style="left:646.5px;top:185.2px;width:8.600px;height:8.600px;background:#8c6239"></div>
<div class="a" style="left:656.0px;top:185.2px;width:8.600px;height:8.600px;background:#754c24"></div>
<div class="a" style="left:665.4px;top:185.2px;width:8.600px;height:8.600px;background:#603813"></div>
<div class="a" style="left:674.9px;top:185.2px;width:8.600px;height:8.600px;background:#42210b"></div>
<div class="a" style="left:552.0px;top:194.7px;width:8.600px;height:8.600px;background:#ddd;border-radius:5px"></div>
<div class="a" style="left:561.5px;top:194.7px;width:8.600px;height:8.600px;background:#f4f4f4"></div>
<div class="a" style="left:570.9px;top:194.7px;width:8.600px;height:8.600px;background:linear-gradient(90deg,#fff,#000)"></div>
<div class="a" style="left:580.4px;top:194.7px;width:8.600px;height:8.600px;background:linear-gradient(90deg,#5aa83a,#d8f0b8,#5aa83a)"></div>
<div class="a" style="left:589.8px;top:194.7px;width:8.600px;height:8.600px;background:radial-gradient(circle,#e8f8ff,#29abe2)"></div>
<div class="a" style="left:599.2px;top:194.7px;width:8.600px;height:8.600px;background:linear-gradient(90deg,#3aa860,#3a8ad0)"></div>
<div class="a" style="left:608.7px;top:194.7px;width:8.600px;height:8.600px;background:radial-gradient(circle,#ff2a9a,#f060b0)"></div>
<div class="a" style="left:618.1px;top:194.7px;width:8.600px;height:8.600px;background:radial-gradient(circle,#ff7a30,#f03a28)"></div>
<div class="a" style="left:627.6px;top:194.7px;width:8.600px;height:8.600px;background:radial-gradient(circle,#f4b0b0,#e63440)"></div>
<div class="a" style="left:637.0px;top:194.7px;width:8.600px;height:8.600px;background:#fff;border:1px solid #c44"></div><div class="a" style="left:639.0px;top:196.7px;width:5px;height:5px;border:1px solid #333;background:#fff"></div>
<div class="a" style="left:646.5px;top:194.7px;width:8.600px;height:8.600px;background:radial-gradient(circle,#fff,#e010a0)"></div>
<svg class="a" style="left:552.0px;top:204.1px" width="9" height="9"><path d="M0.5 3h3l1-1h4v6h-8z" fill="#eee" stroke="#777" stroke-width="0.8"/></svg>
<div class="a" style="left:561.5px;top:204.1px;width:8.600px;height:8.600px;background:#cccccc"></div>
<div class="a" style="left:570.9px;top:204.1px;width:8.600px;height:8.600px;background:#000000"></div>
<div class="a" style="left:580.4px;top:204.1px;width:8.600px;height:8.600px;background:#ffffff"></div>
<div class="a" style="left:589.8px;top:204.1px;width:8.600px;height:8.600px;background:#1a1a1a"></div>
<div class="a" style="left:599.2px;top:204.1px;width:8.600px;height:8.600px;background:#333333"></div>
<div class="a" style="left:608.7px;top:204.1px;width:8.600px;height:8.600px;background:#4d4d4d"></div>
<div class="a" style="left:618.1px;top:204.1px;width:8.600px;height:8.600px;background:#666666"></div>
<div class="a" style="left:627.6px;top:204.1px;width:8.600px;height:8.600px;background:#808080"></div>
<div class="a" style="left:637.0px;top:204.1px;width:8.600px;height:8.600px;background:#999999"></div>
<div class="a" style="left:646.5px;top:204.1px;width:8.600px;height:8.600px;background:#cccccc"></div>
<div class="a" style="left:656.0px;top:204.1px;width:8.600px;height:8.600px;background:#e2e2e2"></div>
<svg class="a" style="left:552.0px;top:213.6px" width="9" height="9"><path d="M0.5 3h3l1-1h4v6h-8z" fill="#eee" stroke="#777" stroke-width="0.8"/></svg>
<div class="a" style="left:561.5px;top:213.6px;width:8.600px;height:8.600px;background:#ed1c24"></div>
<div class="a" style="left:570.9px;top:213.6px;width:8.600px;height:8.600px;background:#cccccc"></div>
<div class="a" style="left:580.4px;top:213.6px;width:8.600px;height:8.600px;background:#29abe2"></div>
<div class="a" style="left:589.8px;top:213.6px;width:8.600px;height:8.600px;background:#7ac943"></div>
<div class="a" style="left:599.2px;top:213.6px;width:8.600px;height:8.600px;background:#ff931e"></div>
<div class="a" style="left:608.7px;top:213.6px;width:8.600px;height:8.600px;background:#ff7bac"></div>
<svg class="a" style="left:552.0px;top:223.0px" width="9" height="9"><path d="M0.5 3h3l1-1h4v6h-8z" fill="#eee" stroke="#777" stroke-width="0.8"/></svg>
<div class="a" style="left:561.5px;top:223.0px;width:8.600px;height:8.600px;background:#f26a10"></div>
<div class="a" style="left:648px;top:204px;width:18px;height:9px;background:#e6e6e6;border:1px solid #bbb"></div>
<svg class="a" style="left:647px;top:196px" width="13" height="16" viewBox="0 0 13 16"><path d="M4 1.2c.9-.6 1.8 0 1.8 1v4l.4-.4c.6-.6 1.4-.4 1.7.2.6-.5 1.4-.3 1.7.4.7-.3 1.4.2 1.4 1v3.600c0 2-1 3.500-3 3.500H6.500c-1.300 0-2-.6-2.800-1.800L1.300 9.300c-.5-.8.400-1.700 1.300-1l1.400 1.200z" fill="#fff" stroke="#222" stroke-width="0.9"/></svg>
<div class="a" style="left:685px;top:164px;width:12px;height:87px;background:#e2e2e2"></div>
<div class="dd" style="left:688px;top:171px;border-width:0 2.5px 3px 2.5px;border-style:solid;border-color:transparent transparent #8a8a8a transparent"></div>
<div class="dd" style="left:688px;top:246px;border-width:3px 2.5px 0 2.5px;border-top-color:#8a8a8a"></div>
<div class="a" style="left:550px;top:252px;width:135px;height:1px;background:#4a4a4a"></div>
<svg class="a" style="left:555px;top:253px" width="13" height="11"><rect x="1" y="1.500" width="7" height="5" fill="#bbb" stroke="#444" stroke-width="0.8"/><rect x="2.500" y="3" width="7" height="5" fill="#ddd" stroke="#444" stroke-width="0.8"/><path d="M10 9h2.200l-1.100 1.300z" fill="#111"/></svg>
<svg class="a" style="left:581px;top:253px" width="13" height="11"><rect x="0.500" y="1.500" width="7" height="4" fill="#555" stroke="#222" stroke-width="0.8"/><rect x="2.500" y="3.500" width="7" height="4.500" fill="#777" stroke="#222" stroke-width="0.8"/><path d="M10 9h2.200l-1.100 1.300z" fill="#111"/></svg>
<svg class="a" style="left:604px;top:253px" width="13" height="11"><rect x="1.500" y="1.500" width="9" height="7" fill="#e4e4e4" stroke="#333" stroke-width="0.9"/><rect x="1.500" y="1.500" width="9" height="2" fill="#555"/><rect x="3.500" y="5" width="5" height="2" fill="#999"/></svg>
<svg class="a" style="left:625px;top:253px" width="13" height="11"><path d="M1.500 3h3l1-1h4v6.500h-8z" fill="#e6e6e6" stroke="#444" stroke-width="0.8"/><path d="M10 0.500v3M8.500 2h3" stroke="#222" stroke-width="0.9"/></svg>
<svg class="a" style="left:647px;top:253px" width="13" height="11"><path d="M3.500 3.500h5v5h-5z" fill="#eee" stroke="#555" stroke-width="0.8"/><path d="M2 8.500h5" stroke="#999" stroke-width="0.8"/></svg>
<svg class="a" style="left:667px;top:253px" width="13" height="11"><rect x="3" y="3.500" width="5" height="5.500" fill="#ccc" stroke="#555" stroke-width="0.8"/><path d="M2 3h7M4.500 1.500h2" stroke="#444" stroke-width="0.9"/><path d="M4.500 5v3M6.500 5v3" stroke="#777" stroke-width="0.6"/></svg>
<div class="a" style="left:550px;top:267px;width:146px;height:11px;background:linear-gradient(#8a8a8a,#7a7a7a)"></div>
<div class="a" style="left:551px;top:268px;width:32px;height:10px;background:linear-gradient(#a2a2a2,#8b8b8b);border-right:1px solid #555;border-top:1px solid #b8b8b8"></div>
<div class="tab" style="left:555.3px;top:269.7px;color:#3a3a3a;font-size:7.700px;transform:scaleX(0.810);transform-origin:0 0">STROKE</div>
<div class="a" style="left:583px;top:267px;width:49px;height:12px;background:#d6d6d6;border-left:1px solid #eee;border-top:1px solid #eee"></div>
<svg class="a" style="left:583px;top:270px" width="5" height="7"><path d="M2.500 0L4.500 2.500H0.500zM2.500 7L4.500 4.500H0.500z" fill="#222"/></svg>
<div class="tab" style="left:590px;top:269.7px;color:#222;font-size:7.700px;transform:scaleX(0.846);transform-origin:0 0">GRADIENT</div>
<div class="a" style="left:632px;top:268px;width:38px;height:10px;background:linear-gradient(#a2a2a2,#8b8b8b);border-right:1px solid #555;border-top:1px solid #b8b8b8"></div>
<div class="tab" style="left:637px;top:269.7px;color:#3a3a3a;font-size:7.700px;transform:scaleX(0.887);transform-origin:0 0">TRANSPA</div>
<svg class="a" style="left:685px;top:270px" width="9" height="7"><path d="M0 2.500h2.500l-1.250 2z" fill="#333"/><path d="M3.500 1.500h5M3.500 3.500h5M3.500 5.500h5" stroke="#333" stroke-width="1"/></svg>
<div class="a" style="left:550px;top:278px;width:146px;height:113px;background:#d6d6d6"></div>
<div class="a" style="left:556px;top:282px;width:20px;height:20px;border:1px solid #c22;background:radial-gradient(circle closest-side,#fff 35%,#e3222d 105%)"></div>
<div class="a" style="left:576px;top:282px;width:6px;height:20px;border:1px solid #999;background:#e6e6e6"></div><div class="dd" style="left:578px;top:290px;border-width:3px 2px 0 2px"></div>
<div class="t" style="left:585px;top:287px;font-size:8px;transform:scaleX(0.859);transform-origin:0 0">Type:</div>
<div class="inp" style="left:604px;top:285px;width:69px;height:12px;border-color:#e8e8e8"></div>
<div class="t" style="left:607px;top:287px;font-size:8px;transform:scaleX(0.767);transform-origin:0 0">Radial</div>
<div class="a" style="left:673px;top:285px;width:13px;height:12px;background:#fafafa;border:1px solid #e8e8e8"></div><div class="dd" style="left:677px;top:290px;border-width:3px 3px 0 3px"></div>
<svg class="a" style="left:560px;top:306px" width="13" height="13"><rect x="1" y="1" width="4" height="4" fill="#333"/><rect x="7" y="1" width="4" height="4" fill="#888"/><rect x="1" y="7" width="4" height="4" fill="#888"/><rect x="7" y="7" width="4" height="4" fill="#333"/></svg>
<svg class="a" style="left:589px;top:308px" width="10" height="8"><path d="M0.500 7.500h8L5 1.500z" fill="#bbb" stroke="#555" stroke-width="0.8"/></svg>
<div class="inp" style="left:603px;top:307px;width:31px;height:12px;border-color:#e8e8e8"></div>
<div class="t" style="left:608px;top:309px;font-size:8px">0</div>
<div class="a" style="left:624px;top:308px;width:1px;height:10px;background:#ccc"></div>
<div class="a" style="left:627px;top:310px;width:0;height:0;border-top:2.5px solid transparent;border-bottom:2.5px solid transparent;border-left:3px solid #333"></div>
<div class="t" style="left:635px;top:305px;font-size:7px">°</div>
<svg class="a" style="left:643px;top:306px" width="12" height="13"><path d="M2 1v11M0.500 2.500L2 1l1.500 1.500M0.500 10.500L2 12l1.500-1.500" stroke="#222" fill="none" stroke-width="0.9"/><ellipse cx="8" cy="6.500" rx="3.500" ry="2.500" fill="#ddd" stroke="#444" stroke-width="0.9"/></svg>
<div class="inp" style="left:655px;top:307px;width:29px;height:12px;border-color:#e8e8e8"></div>
<div class="t" style="left:658.500px;top:309px;font-size:8px;transform:scaleX(0.779);transform-origin:0 0">100</div>
<div class="t" style="left:686px;top:309px;font-size:8px;transform:scaleX(0.844);transform-origin:0 0">%</div>
<div class="a" style="left:637px;top:321px;width:5px;height:5px;background:#fff;border:1px solid #333;transform:rotate(45deg)"></div>
<div class="a" style="left:557px;top:327px;width:115px;height:8px;border:1px solid #333;background:linear-gradient(90deg,#fff 0%,#fff 45%,#e8232d 100%)"></div>
<svg class="a" style="left:605px;top:335px" width="8" height="9"><path d="M4 0.500L7 3.500V8.500H1V3.500z" fill="#eee" stroke="#222" stroke-width="0.9"/><rect x="2" y="4" width="4" height="4" fill="#fff"/></svg>
<svg class="a" style="left:666px;top:335px" width="8" height="9"><path d="M4 0.500L7 3.500V8.500H1V3.500z" fill="#eee" stroke="#222" stroke-width="0.9"/><rect x="2" y="4" width="4" height="4" fill="#d22"/></svg>
<svg class="a" style="left:676px;top:326px" width="8" height="11"><rect x="1" y="3" width="6" height="7.500" fill="#ccc" stroke="#777" stroke-width="0.8"/><path d="M0 2.500h8M3 1h2" stroke="#777"/></svg>
<div class="t" style="left:574.5px;top:354px;font-size:8px;color:#a2a2a2;text-shadow:0.5px 0.5px 0 #eee;transform:scaleX(0.886);transform-origin:0 0">Opacity:</div>
<div class="a" style="left:603px;top:352px;width:31px;height:12px;background:#dcdcdc;border:1px solid #c4c4c4"></div>
<div class="a" style="left:624px;top:353px;width:1px;height:10px;background:#c4c4c4"></div>
<div class="a" style="left:627px;top:356px;width:0;height:0;border-top:2.5px solid transparent;border-bottom:2.5px solid transparent;border-left:3px solid #777"></div>
<div class="t" style="left:636px;top:354px;font-size:8px;color:#a2a2a2">%</div>
<div class="t" style="left:572px;top:370px;font-size:8px;color:#a2a2a2;text-shadow:0.5px 0.5px 0 #eee;transform:scaleX(0.878);transform-origin:0 0">Location:</div>
<div class="a" style="left:603px;top:368px;width:31px;height:12px;background:#dcdcdc;border:1px solid #c4c4c4"></div>
<div class="a" style="left:624px;top:369px;width:1px;height:10px;background:#c4c4c4"></div>
<div class="a" style="left:627px;top:372px;width:0;height:0;border-top:2.5px solid transparent;border-bottom:2.5px solid transparent;border-left:3px solid #777"></div>
<div class="t" style="left:636px;top:370px;font-size:8px;color:#a2a2a2">%</div>
<svg class="a" style="left:688px;top:383px" width="8" height="8"><path d="M7 1L1 7M7 4L4 7" stroke="#999" stroke-width="1"/></svg>
<div class="a" style="left:550px;top:394px;width:146px;height:11px;background:linear-gradient(#8a8a8a,#7a7a7a)"></div>
<div class="a" style="left:551px;top:394px;width:53px;height:12px;background:#d6d6d6;border-left:1px solid #eee;border-top:1px solid #eee"></div>
<div class="tab" style="left:555.3px;top:396.7px;color:#222;font-size:7.700px;transform:scaleX(0.803);transform-origin:0 0">APPEARANCE</div>
<div class="a" style="left:604px;top:395px;width:64px;height:10px;background:linear-gradient(#a2a2a2,#8b8b8b);border-right:1px solid #555;border-top:1px solid #b8b8b8"></div>
<div class="tab" style="left:609.6px;top:396.7px;color:#3a3a3a;font-size:7.700px;transform:scaleX(0.799);transform-origin:0 0">GRAPHIC STYLES</div>
<svg class="a" style="left:685px;top:397px" width="9" height="7"><path d="M0 2.500h2.500l-1.250 2z" fill="#333"/><path d="M3.500 1.500h5M3.500 3.500h5M3.500 5.500h5" stroke="#333" stroke-width="1"/></svg>
<div class="a" style="left:550px;top:405px;width:146px;height:99.500px;background:#d6d6d6"></div>
<div class="a" style="left:553px;top:409px;width:132px;height:14px;background:#dcdcdc"></div>
<div class="a" style="left:553px;top:425px;width:132px;height:15px;background:#d0d0d0"></div>
<div class="a" style="left:553px;top:426px;width:13px;height:13px;background:#c2c2c2;border:1px solid #b0b0b0"></div>
<div class="a" style="left:553px;top:441px;width:132px;height:15px;background:#d0d0d0"></div>
<div class="a" style="left:553px;top:442px;width:13px;height:13px;background:#c2c2c2;border:1px solid #b0b0b0"></div>
<div class="a" style="left:553px;top:457px;width:132px;height:15px;background:#d0d0d0"></div>
<div class="a" style="left:553px;top:458px;width:13px;height:13px;background:#c2c2c2;border:1px solid #b0b0b0"></div>
<div class="a" style="left:553px;top:423px;width:132px;height:1px;background:#444"></div>
<div class="a" style="left:566px;top:423px;width:1px;height:50px;background:#222"></div>
<div class="a" style="left:553px;top:472px;width:132px;height:1px;background:#222"></div>
<div class="a" style="left:553px;top:409px;width:14px;height:14px;border:1px solid #c22;background:radial-gradient(circle closest-side,#fff 35%,#e3222d 105%)"></div>
<div class="t" style="left:575px;top:412px;font-size:8px;font-weight:bold;transform:scaleX(0.863);transform-origin:0 0">No Selection</div>
<svg class="a" style="left:554px;top:428px" width="11" height="9"><path d="M0.500 4.500C3 0.500 8 0.500 10.500 4.500 8 8 3 8 0.500 4.500z" fill="#f4f4f4" stroke="#222" stroke-width="0.9"/><circle cx="5.500" cy="4" r="2.200" fill="#222"/></svg>
<svg class="a" style="left:554px;top:444px" width="11" height="9"><path d="M0.500 4.500C3 0.500 8 0.500 10.500 4.500 8 8 3 8 0.500 4.500z" fill="#f4f4f4" stroke="#222" stroke-width="0.9"/><circle cx="5.500" cy="4" r="2.200" fill="#222"/></svg>
<svg class="a" style="left:554px;top:460px" width="11" height="9"><path d="M0.500 4.500C3 0.500 8 0.500 10.500 4.500 8 8 3 8 0.500 4.500z" fill="#f4f4f4" stroke="#777" stroke-width="0.9"/><circle cx="5.500" cy="4" r="2.200" fill="#777"/></svg>
<svg class="a" style="left:569px;top:428px" width="6" height="9"><path d="M0.700 0.700L5 4.500 0.700 8.300z" fill="#e8e8e8" stroke="#111" stroke-width="1"/></svg>
<svg class="a" style="left:569px;top:444px" width="6" height="9"><path d="M0.700 0.700L5 4.500 0.700 8.300z" fill="#e8e8e8" stroke="#111" stroke-width="1"/></svg>
<div class="t lnk" style="left:576px;top:428px;font-size:8px;transform:scaleX(0.919);transform-origin:0 0">Stroke:</div>
<div class="t" style="left:576px;top:445px;font-size:8px;transform:scaleX(0.804);transform-origin:0 0">Fill:</div>
<div class="t lnk" style="left:576px;top:461px;font-size:8px;transform:scaleX(0.896);transform-origin:0 0">Opacity:</div>
<div class="t" style="left:607px;top:461px;font-size:8px;transform:scaleX(0.844);transform-origin:0 0">Default</div>
<div class="a" style="left:606px;top:425px;width:13px;height:13px;background:#fff;border:2px solid #333"></div><svg class="a" style="left:606px;top:425px" width="13" height="13"><path d="M2.500 10.500L10.500 2.500" stroke="#c22" stroke-width="1.200"/></svg>
<div class="a" style="left:606px;top:442px;width:13px;height:13px;border:2px solid #333;background:radial-gradient(circle closest-side,#fff 35%,#e3222d 110%)"></div>
<div class="a" style="left:685px;top:406px;width:12px;height:87px;background:#e2e2e2"></div>
<div class="dd" style="left:688px;top:412px;border-width:0 2.500px 3px 2.500px;border-style:solid;border-color:transparent transparent #8a8a8a transparent"></div>
<div class="dd" style="left:688px;top:486px;border-width:3px 2.500px 0 2.500px;border-top-color:#8a8a8a"></div>
<div class="a" style="left:550px;top:493px;width:135px;height:1px;background:#4a4a4a"></div>
<div class="a" style="left:558px;top:495px;width:8px;height:8px;background:#333;border:1px solid #222"></div><div class="a" style="left:560px;top:497px;width:4px;height:4px;background:#aaa"></div>
<div class="a" style="left:582px;top:495px;width:8px;height:8px;background:#fff;border:1px solid #555"></div>
<div class="t" style="left:604px;top:494px;font-size:9px;font-style:italic;font-weight:bold;font-family:'Liberation Serif',serif">fx</div><div class="t" style="left:613px;top:497px;font-size:7px">▾</div>
<svg class="a" style="left:626px;top:495px" width="9" height="9"><circle cx="4.500" cy="4.500" r="3.300" fill="none" stroke="#333"/><path d="M2.200 2.200l4.600 4.600" stroke="#333"/></svg>
<svg class="a" style="left:649px;top:495px" width="9" height="9"><path d="M1.500 7.500h6v-6h-2" fill="none" stroke="#777"/></svg>
<svg class="a" style="left:671px;top:494px" width="8" height="10"><rect x="1.500" y="3" width="5" height="6" fill="#ddd" stroke="#777" stroke-width="0.8"/><path d="M0.500 2.500h7M3 1h2" stroke="#777"/></svg>
<div class="a" style="left:550px;top:507px;width:146px;height:12px;background:linear-gradient(#8a8a8a,#7a7a7a)"></div>
<div class="a" style="left:551px;top:507px;width:34px;height:13px;background:#d6d6d6;border-left:1px solid #eee;border-top:1px solid #eee"></div>
<div class="tab" style="left:555.5px;top:509.7px;color:#222;font-size:7.700px;transform:scaleX(0.763);transform-origin:0 0">LAYERS</div>
<div class="a" style="left:585px;top:508px;width:50px;height:11px;background:linear-gradient(#a2a2a2,#8b8b8b);border-right:1px solid #555;border-top:1px solid #b8b8b8"></div>
<div class="tab" style="left:589.5px;top:509.7px;color:#3a3a3a;font-size:7.700px;transform:scaleX(0.823);transform-origin:0 0">ARTBOARDS</div>
<svg class="a" style="left:685px;top:510px" width="9" height="7"><path d="M0 2.500h2.500l-1.250 2z" fill="#333"/><path d="M3.500 1.500h5M3.500 3.500h5M3.500 5.500h5" stroke="#333" stroke-width="1"/></svg>
<div class="a" style="left:550px;top:519px;width:146px;height:1px;background:#dcdcdc"></div>
</body></html>
